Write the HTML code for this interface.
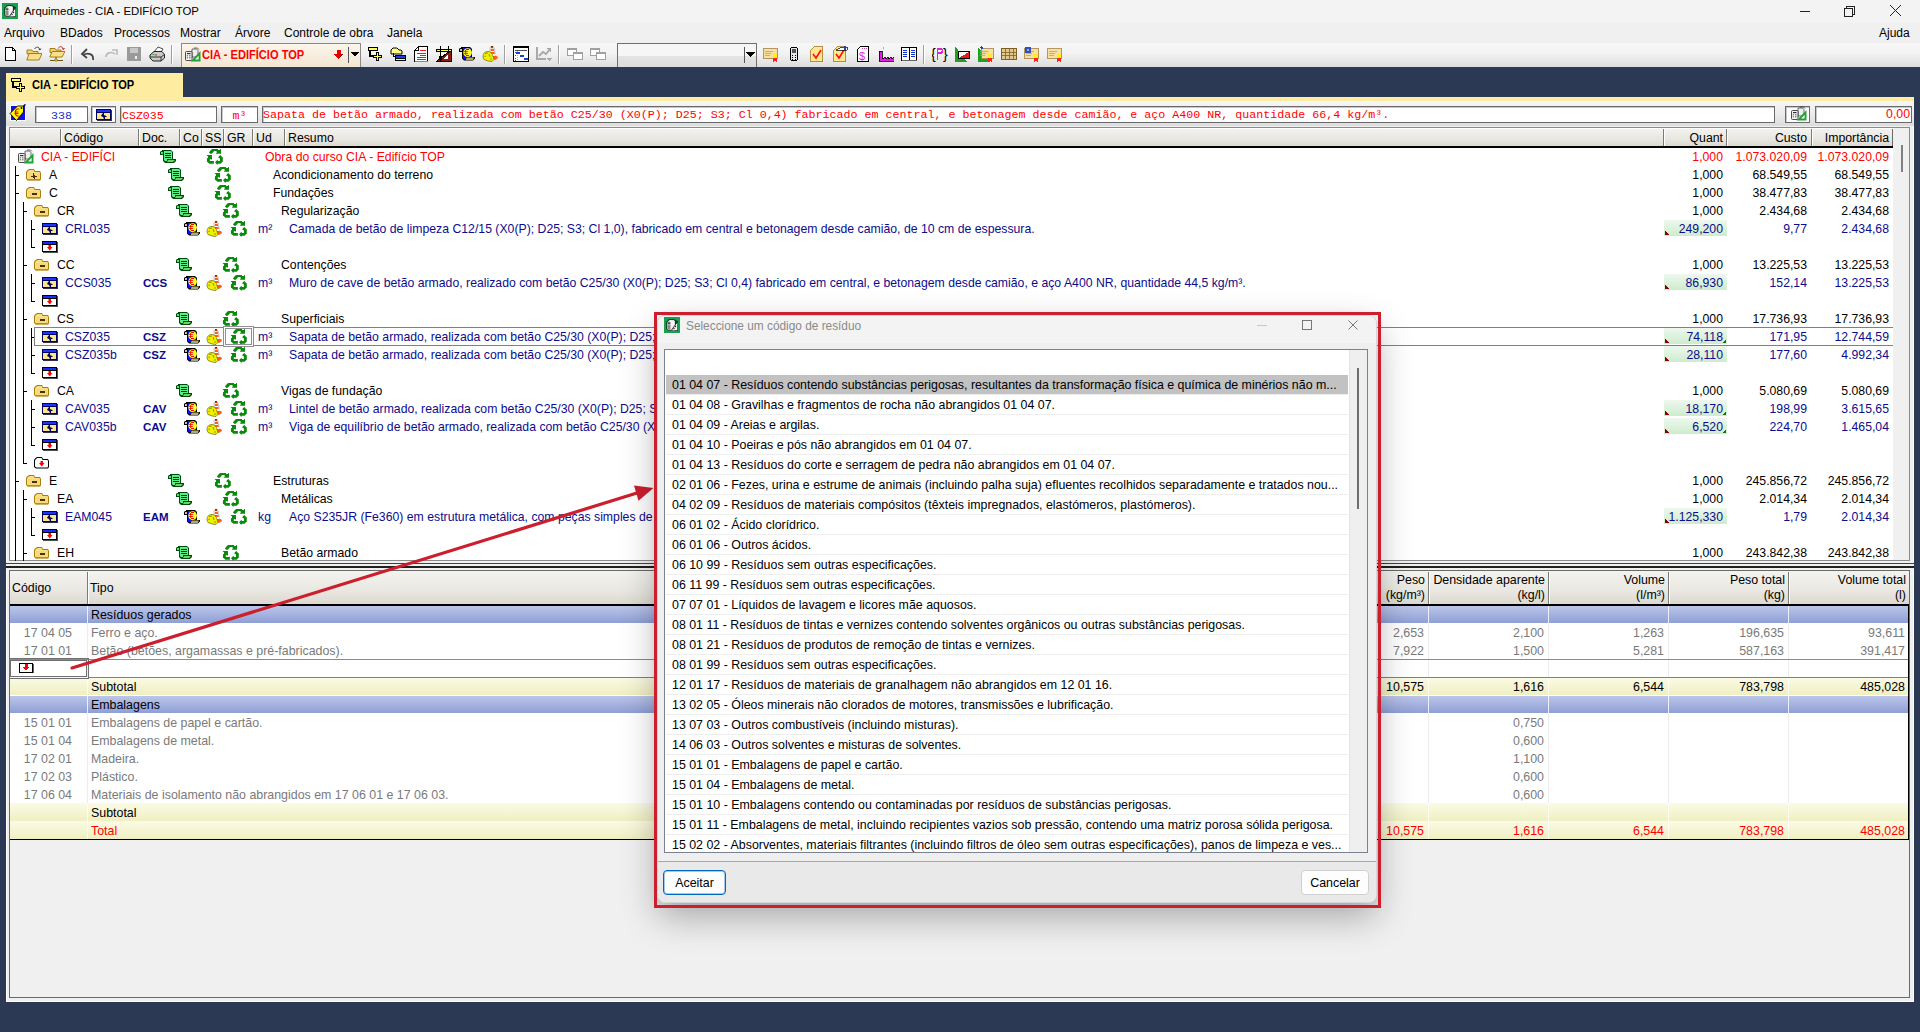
<!DOCTYPE html><html><head><meta charset="utf-8"><style>
*{margin:0;padding:0;box-sizing:border-box}
html,body{width:1920px;height:1032px;overflow:hidden;background:#2b3955;font-family:"Liberation Sans",sans-serif;font-size:12px;color:#000}
div{position:absolute}
.t{white-space:pre;overflow:visible}
</style></head><body><div style="left:0px;top:0px;width:1920px;height:23px;background:#f3f3f3"></div><div style="left:0px;top:23px;width:1920px;height:20px;background:#f0f0f0"></div><div style="left:0px;top:43px;width:1920px;height:24px;background:linear-gradient(#f7f7f7,#f2f2f2 45%,#dddddd)"></div><svg style="position:absolute;left:2px;top:3px" width="16" height="16" viewBox="0 0 16 16" shape-rendering="crispEdges"><rect x="0" y="0" width="16" height="16" fill="#17a050"/><g shape-rendering="auto"><path d="M2.2,5 L5,2 H9.5 L11.5,3 L14,4.3 V13.5 L13,14 H4.5 L2.2,12 Z" fill="#0a3a18"/><path d="M3,5.5 L5.3,3 H9.3 L11,4 V13.2 H4.5 L3,11.7 Z" fill="#c8c8c8"/><path d="M6,3.2 H9.2 L10.5,4 V9 L8,12.5 H6 Z" fill="#f4f4f4"/><rect x="3.5" y="5.5" width="3" height="1.2" fill="#222"/><rect x="3.5" y="7.5" width="3" height="5" fill="#8a8a8a"/><path d="M7.5,13.2 L13.3,5 V13.2 Z" fill="#f2f2f2"/><path d="M7.5,13.2 L13.3,5" stroke="#222" stroke-width="0.9"/><circle cx="11.5" cy="9.5" r="0.7" fill="#222"/><circle cx="10" cy="11.5" r="0.7" fill="#222"/></g></svg><div class="t" style="left:24px;top:2px;height:18px;line-height:18px;text-align:left;font-size:11.4px;color:#000">Arquimedes - CIA - EDIFÍCIO TOP</div><div style="left:1800px;top:11px;width:10px;height:1px;background:#222"></div><svg style="position:absolute;left:1843px;top:5px" width="13" height="13" viewBox="0 0 13 13" shape-rendering="crispEdges"><rect x="1.5" y="3.5" width="8" height="8" fill="none" stroke="#222"/><path d="M3.5 3.5V1.5h8v8h-2" fill="none" stroke="#222"/></svg><svg style="position:absolute;left:1889px;top:4px" width="13" height="13" viewBox="0 0 13 13" shape-rendering="crispEdges"><path d="M1 1L12 12M12 1L1 12" stroke="#222" stroke-width="1.1" fill="none"/></svg><div class="t" style="left:4px;top:24px;height:18px;line-height:18px;text-align:left;font-size:12px">Arquivo</div><div class="t" style="left:60px;top:24px;height:18px;line-height:18px;text-align:left;font-size:12px">BDados</div><div class="t" style="left:114px;top:24px;height:18px;line-height:18px;text-align:left;font-size:12px">Processos</div><div class="t" style="left:180px;top:24px;height:18px;line-height:18px;text-align:left;font-size:12px">Mostrar</div><div class="t" style="left:235px;top:24px;height:18px;line-height:18px;text-align:left;font-size:12px">Árvore</div><div class="t" style="left:284px;top:24px;height:18px;line-height:18px;text-align:left;font-size:12px">Controle de obra</div><div class="t" style="left:387px;top:24px;height:18px;line-height:18px;text-align:left;font-size:12px">Janela</div><div class="t" style="left:1879px;top:24px;height:18px;line-height:18px;text-align:left;font-size:12px">Ajuda</div><svg style="position:absolute;left:3px;top:46px" width="16" height="16" viewBox="0 0 16 16" shape-rendering="crispEdges"><path d="M2.5 1.5h7l3 3v10h-10z" fill="#fff" stroke="#000"/><path d="M9.5 1.5v3h3" fill="none" stroke="#000"/></svg><svg style="position:absolute;left:26px;top:46px" width="16" height="16" viewBox="0 0 16 16" shape-rendering="crispEdges"><g shape-rendering="auto"><path d="M1,4 H6 L7,5.5 H12 V8 H1 Z" fill="#f3cf70" stroke="#9a7410" stroke-width="0.9"/><path d="M0.8,14 L3.2,7.5 H16 L13,14 Z" fill="#fbe08c" stroke="#9a7410" stroke-width="0.9"/><path d="M8.5,3 C10,0.5 13,0.5 14,3.5 M12.5,3 L14,4 L15,2.5" stroke="#333" stroke-width="0.9" fill="none"/></g></svg><svg style="position:absolute;left:49px;top:46px" width="16" height="16" viewBox="0 0 16 16" shape-rendering="crispEdges"><g shape-rendering="auto"><path d="M1,2.5 H6 L7,4 H12 V6.5 H1 Z" fill="#f3cf70" stroke="#9a7410" stroke-width="0.9"/><path d="M0.8,11 L3.2,5.5 H16 L13,11 Z" fill="#fbe08c" stroke="#9a7410" stroke-width="0.9"/><path d="M7,11 V13.5 M1,14.5 H14" stroke="#6a5a10" stroke-width="1.2"/><circle cx="7" cy="14" r="1.4" fill="#d8c840" stroke="#6a5a10" stroke-width="0.5"/><path d="M9,2.5 C10.5,0 13.5,0 14.5,3 M13,2.5 L14.5,3.5 L15.5,2" stroke="#e02020" stroke-width="1" fill="none"/></g></svg><div style="left:71px;top:45px;width:1px;height:19px;background:#a0a0a0;border-right:1px solid #fff;width:2px"></div><svg style="position:absolute;left:80px;top:46px" width="16" height="16" viewBox="0 0 16 16" shape-rendering="crispEdges"><path d="M13 14c1-6-5-8-10-5" stroke="#444" stroke-width="1.8" fill="none" shape-rendering="auto"/><path d="M7 3L2 8l5 4" stroke="#444" stroke-width="1.8" fill="none" shape-rendering="auto"/></svg><svg style="position:absolute;left:103px;top:46px" width="16" height="16" viewBox="0 0 16 16" shape-rendering="crispEdges"><path d="M3 11c0-4 5-6 9-3" stroke="#bbb" stroke-width="1.6" fill="none" shape-rendering="auto"/><path d="M9 4h5v5" stroke="#bbb" stroke-width="1.6" fill="none" shape-rendering="auto"/></svg><svg style="position:absolute;left:126px;top:46px" width="16" height="16" viewBox="0 0 16 16" shape-rendering="crispEdges"><rect x="1" y="1" width="14" height="14" fill="#9a9a9a"/><rect x="4" y="2" width="8" height="5" fill="#c8c8c8"/><rect x="9" y="10" width="2" height="3" fill="#eee"/></svg><svg style="position:absolute;left:149px;top:46px" width="16" height="16" viewBox="0 0 16 16" shape-rendering="crispEdges"><g shape-rendering="auto"><path d="M5,6 L9,1 L14,3 L11,8 Z" fill="#fff" stroke="#222" stroke-width="0.8"/><path d="M1,9 L5,5.5 H13 L15.5,8.5 V12 L12,15 H4 L1,12 Z" fill="#c8c8c8" stroke="#111" stroke-width="0.9"/><path d="M1,11 H12 L15.5,8.5 M12,11 V15" stroke="#111" stroke-width="0.8" fill="none"/><path d="M3.5,8.5 H5.5" stroke="#20c020" stroke-width="1.2"/><path d="M6,9 H8" stroke="#e02020" stroke-width="1.2"/></g></svg><div style="left:171px;top:45px;width:1px;height:19px;background:#a0a0a0;border-right:1px solid #fff;width:2px"></div><div style="left:181px;top:43px;width:180px;height:24px;background:linear-gradient(#fbf5ea,#f2e6d2);border:1px solid #8a8a8a;border-bottom:none"></div><svg style="position:absolute;left:183px;top:45px" width="20" height="20" viewBox="0 0 20 20" shape-rendering="crispEdges"><g shape-rendering="auto"><path d="M9,4 H13.5 L15,5.5 V12 H9 Z" fill="#eee" stroke="#333" stroke-width="0.7"/><path d="M11,3 H14.5 L16,4.5" fill="none" stroke="#333" stroke-width="0.7"/><rect x="2.5" y="6.5" width="6.5" height="9" rx="1" fill="#f2f2f2" stroke="#222" stroke-width="0.8"/><path d="M4,8.6 H7.5" stroke="#222" stroke-width="1.1"/><path d="M3.8,10.8 H5 M6,10.8 H7.5 M3.8,12.8 H5 M6,12.8 H7.5" stroke="#333" stroke-width="0.8"/><path d="M7.5,16.5 L17.5,6 V16.5 Z" fill="#22a03a"/><path d="M12,14.5 L15.6,10.8 V14.5 Z" fill="#e8f8e8"/></g></svg><div class="t" style="left:202px;top:46px;height:18px;line-height:18px;text-align:left;font-size:12.6px;font-weight:bold;color:#ff0000;transform:scaleX(0.88);transform-origin:0 0">CIA - EDIFÍCIO TOP</div><svg style="position:absolute;left:334px;top:50px" width="9" height="9" viewBox="0 0 9 9" shape-rendering="crispEdges"><path d="M2.5 0h4v4h2.5L4.5 9L0 4h2.5z" fill="#e80000"/><path d="M4.5 9L9 4h-1L4.5 8z" fill="#700000"/></svg><div style="left:348px;top:47px;width:1px;height:16px;background:#555"></div><svg style="position:absolute;left:351px;top:52px" width="8" height="5" viewBox="0 0 8 5" shape-rendering="crispEdges"><path d="M0 0h8L4 5z" fill="#000"/></svg><svg style="position:absolute;left:367px;top:46px" width="16" height="16" viewBox="0 0 16 16" shape-rendering="crispEdges"><rect x="1" y="1" width="10" height="4" fill="#000"/><rect x="2" y="2" width="8" height="2" fill="#ffff60"/><path d="M3 5v5h4" stroke="#000" stroke-width="1.2" fill="none"/><path d="M9 6h3v3h3v3h-3v3H9v-3H6V9h3z" fill="#000"/><path d="M10 7h1v3h3v1h-3v3h-1v-3H7v-1h3z" fill="#ffff60"/></svg><svg style="position:absolute;left:390px;top:46px" width="16" height="16" viewBox="0 0 16 16" shape-rendering="crispEdges"><g shape-rendering="auto"><path d="M1,7 V4 L3,2 H7 L9,4 H11 L12,5 V8 H1 Z" fill="#ffff80" stroke="#000" stroke-width="1"/></g><rect x="5" y="9" width="11" height="6" fill="#000"/><rect x="6" y="10" width="9" height="2" fill="#1040f0"/><rect x="6" y="12.5" width="9" height="1.5" fill="#ffff60"/><rect x="3" y="7" width="1" height="4" fill="#000"/><rect x="3" y="10" width="3" height="1" fill="#000"/></svg><svg style="position:absolute;left:413px;top:46px" width="16" height="16" viewBox="0 0 16 16" shape-rendering="crispEdges"><path d="M1.5 4.5l4-4h9v15h-13z" fill="#fff" stroke="#000"/><path d="M1.5 4.5h4v-4" fill="none" stroke="#000"/><path d="M7 4h6M4 7h9M7 9h6M4 11h9M4 13h9" stroke="#ff1010"/><rect x="2" y="15" width="13" height="1" fill="#888"/></svg><svg style="position:absolute;left:436px;top:46px" width="16" height="16" viewBox="0 0 16 16" shape-rendering="crispEdges"><path d="M1 15L15 4v11z" fill="#8a1a10" stroke="#000"/><path d="M7 13l5-4v4z" fill="#fff"/><rect x="0" y="3" width="16" height="3" fill="#000"/><rect x="1" y="4" width="14" height="1" fill="#ffff40"/><rect x="4" y="0" width="1" height="15" fill="#000"/><rect x="12" y="0" width="1" height="5" fill="#000"/><circle cx="4.5" cy="12" r="1.5" fill="none" stroke="#000"/></svg><svg style="position:absolute;left:457px;top:44px" width="20" height="20" viewBox="0 0 20 20" shape-rendering="crispEdges"><g shape-rendering="auto"><path d="M4,3 H13 L14,4 L15,5 V13 H18 V14.5 L17,15.5 L16,16.5 H7 L6,15.5 L5,14.5 V8 H2 V5 L3,4 H4 Z" fill="#000"/><path d="M5,4 H13 L14,5 V13 H9 V15 H7 L6,14 V4 Z" fill="#1010ff"/><circle cx="10.6" cy="8.6" r="4.3" fill="#ffff20"/><path d="M8.2,6 H9.2 V11 H8.2 Z M9,5 H12 V6 H9 Z M7,7.2 H11 V8 H7 Z M7,9.2 H11 V10 H7 Z M9,11 H12 V12 H9 Z" fill="#ff0000"/><path d="M3,5 H5 V7 H3 Z" fill="#c0c0c0"/><path d="M9.5,13.5 H17 L16,15.5 H9 Z" fill="#b8b040"/><path d="M9,15 H16 V15.6 H9 Z" fill="#d8d8d8"/></g></svg><svg style="position:absolute;left:480px;top:44px" width="20" height="20" viewBox="0 0 20 20" shape-rendering="crispEdges"><g shape-rendering="auto"><path d="M11,2 H13 L14.5,8 L15,11.5 L17.5,12.5 L18,14 L15,16 L12.5,15 L10.5,8 Z" fill="#ff6010"/><path d="M11,2 H13 L13.3,3.5 H10.8 Z" fill="#902000"/><path d="M10.6,4.2 H13.5 L13.7,5 H10.5 Z M10.3,7 H14 L14.3,8 H10.2 Z M11.5,10 H14.8 L15,12 H12 Z" fill="#fff"/><path d="M10.2,3 L9.8,8 M14.5,4 L15.2,10" stroke="#9aa8b8" stroke-width="0.6" fill="none"/><path d="M3,13 C3,9 5,7.5 8,7.5 C10.5,7.5 12.5,9.5 13,12.5 L14,15.5 L12,17.5 L8,17 L4,15.5 Z" fill="#f0f000" stroke="#6a6a00" stroke-width="0.7"/><path d="M5,9.5 L8,9 M9,10 L10,13 M11,14 L11,16 M4.5,12.5 L6,12" stroke="#8a8a00" stroke-width="0.9"/></g></svg><div style="left:504px;top:45px;width:1px;height:19px;background:#a0a0a0;border-right:1px solid #fff;width:2px"></div><svg style="position:absolute;left:513px;top:46px" width="16" height="16" viewBox="0 0 16 16" shape-rendering="crispEdges"><rect x="0.5" y="0.5" width="15" height="15" fill="#fff" stroke="#000"/><rect x="0" y="0" width="16" height="2" fill="#000"/><path d="M2 4h12" stroke="#000" stroke-width="0.7"/><path d="M2 6h1M2 9h1M2 12h1M2 14h1" stroke="#555"/><path d="M4 5v10" stroke="#aaa" stroke-dasharray="1 1"/><rect x="3" y="6" width="4" height="2" fill="#1040e0"/><rect x="7" y="9" width="4" height="2" fill="#1040e0"/><rect x="11" y="12" width="4" height="2" fill="#1040e0"/></svg><svg style="position:absolute;left:536px;top:46px" width="16" height="16" viewBox="0 0 16 16" shape-rendering="crispEdges"><path d="M1 1v12h9" stroke="#a8a8a8" fill="none" stroke-width="1.2"/><path d="M3 10l4-4 3 2 4-5" stroke="#a8a8a8" fill="none" stroke-width="1.8" shape-rendering="auto"/><path d="M10 2h5v5z" fill="#a8a8a8"/><path d="M10 12h6l-3 3z" fill="#a8a8a8"/></svg><div style="left:558px;top:45px;width:1px;height:19px;background:#a0a0a0;border-right:1px solid #fff;width:2px"></div><svg style="position:absolute;left:567px;top:46px" width="16" height="16" viewBox="0 0 16 16" shape-rendering="crispEdges"><rect x="0.5" y="2.5" width="9" height="7" fill="#fff" stroke="#a0a0a0" stroke-width="1.2"/><rect x="1" y="2" width="8" height="2" fill="#a0a0a0"/><rect x="6.5" y="6.5" width="9" height="7" fill="#fff" stroke="#a0a0a0" stroke-width="1.2"/><rect x="7" y="6" width="8" height="2" fill="#a0a0a0"/><rect x="2" y="9" width="4" height="1" fill="#a0a0a0"/></svg><svg style="position:absolute;left:590px;top:46px" width="16" height="16" viewBox="0 0 16 16" shape-rendering="crispEdges"><rect x="0.5" y="2.5" width="9" height="7" fill="#fff" stroke="#a0a0a0" stroke-width="1.2"/><rect x="1" y="2" width="8" height="2" fill="#a0a0a0"/><rect x="6.5" y="6.5" width="9" height="7" fill="#fff" stroke="#a0a0a0" stroke-width="1.2"/><rect x="7" y="6" width="8" height="2" fill="#a0a0a0"/><rect x="2" y="9" width="4" height="1" fill="#a0a0a0"/></svg><div style="left:617px;top:43px;width:140px;height:24px;background:linear-gradient(#f6f6f6 0,#f6f6f6 50%,#e4e4e4 51%,#dcdcdc);border:1px solid #6e6e6e;border-bottom:none"></div><div style="left:744px;top:47px;width:1px;height:16px;background:#555"></div><svg style="position:absolute;left:746px;top:52px" width="9" height="5" viewBox="0 0 9 5" shape-rendering="crispEdges"><path d="M0 0h9L4.5 5z" fill="#000"/></svg><svg style="position:absolute;left:763px;top:46px" width="16" height="16" viewBox="0 0 16 16" shape-rendering="crispEdges"><rect x="0.5" y="2.5" width="14" height="10" fill="#f8e0a0" stroke="#a08040" stroke-width="0.8"/><path d="M2 5h8M2 7h6M2 9h5" stroke="#c0a060" stroke-width="0.8"/><circle cx="12" cy="10" r="2.5" fill="#ffee20"/><path d="M10 12v4l2-1 2 1v-4" fill="#ff2020"/></svg><svg style="position:absolute;left:786px;top:46px" width="16" height="16" viewBox="0 0 16 16" shape-rendering="crispEdges"><rect x="4.5" y="1.5" width="7" height="13" rx="2" fill="#e8e8e8" stroke="#000"/><rect x="6" y="3" width="4" height="4" fill="#555"/><path d="M6 9h1M9 9h1M6 11h1M9 11h1M6 13h1M9 13h1" stroke="#000"/></svg><svg style="position:absolute;left:809px;top:46px" width="16" height="16" viewBox="0 0 16 16" shape-rendering="crispEdges"><path d="M1.5 3.5l3-3h9v15h-12z" fill="#ffe890" stroke="#a07820" stroke-width="0.8"/><path d="M4 8l3 4 5-8" stroke="#ff1010" stroke-width="1.6" fill="none" shape-rendering="auto"/></svg><svg style="position:absolute;left:832px;top:46px" width="16" height="16" viewBox="0 0 16 16" shape-rendering="crispEdges"><path d="M1.5 3.5l3-3h9v15h-12z" fill="#ffe890" stroke="#a07820" stroke-width="0.8"/><path d="M4 8l3 4 5-8" stroke="#ff1010" stroke-width="1.6" fill="none" shape-rendering="auto"/><path d="M4 4l6-3 5 0v3h-5z" fill="#fff" stroke="#000" stroke-width="0.7"/><path d="M13 0v4" stroke="#2040d0" stroke-width="1.5"/></svg><svg style="position:absolute;left:855px;top:46px" width="16" height="16" viewBox="0 0 16 16" shape-rendering="crispEdges"><path d="M2.5 3.5l3-3h8v15h-11z" fill="#fff" stroke="#000"/><path d="M7 2h1M9 2h1M11 2h1" stroke="#c040c0"/><text x="4" y="14" font-size="11" font-family="Liberation Sans" fill="#e020e0">$</text></svg><svg style="position:absolute;left:878px;top:46px" width="16" height="16" viewBox="0 0 16 16" shape-rendering="crispEdges"><path d="M1 5v10h15v-4l-3 2v-2l-3 2v-2l-3 2v-2l-3 2V5z" fill="#e020e0" stroke="#000" stroke-width="0.8"/><path d="M5 1l1 2" stroke="#aaa"/></svg><svg style="position:absolute;left:901px;top:46px" width="16" height="16" viewBox="0 0 16 16" shape-rendering="crispEdges"><rect x="0.5" y="1.5" width="15" height="13" fill="#fff" stroke="#000"/><path d="M8 2v12" stroke="#000"/><rect x="2" y="4" width="4" height="1" fill="#1030d0"/><rect x="2" y="6" width="4" height="1" fill="#1030d0"/><rect x="2" y="8" width="4" height="1" fill="#1030d0"/><rect x="2" y="10" width="4" height="1" fill="#1030d0"/><rect x="10" y="4" width="4" height="1" fill="#1030d0"/><rect x="10" y="6" width="4" height="1" fill="#1030d0"/><rect x="10" y="8" width="4" height="1" fill="#1030d0"/><rect x="10" y="10" width="4" height="1" fill="#1030d0"/><rect x="1" y="14" width="15" height="1" fill="#666"/></svg><div style="left:923px;top:45px;width:1px;height:19px;background:#a0a0a0;border-right:1px solid #fff;width:2px"></div><svg style="position:absolute;left:932px;top:46px" width="16" height="16" viewBox="0 0 16 16" shape-rendering="crispEdges"><text x="-1" y="13" font-size="14" font-family="Liberation Sans" fill="#000">{</text><text x="11" y="13" font-size="14" font-family="Liberation Sans" fill="#000">}</text><path d="M5 3h4c2 0 2 4 0 4H6M5.5 3v11" stroke="#e020e0" stroke-width="1.8" fill="none"/></svg><svg style="position:absolute;left:955px;top:46px" width="16" height="16" viewBox="0 0 16 16" shape-rendering="crispEdges"><path d="M0 0v16h12z" fill="#20a020"/><rect x="3.5" y="5.5" width="11" height="7" fill="#fff" stroke="#000"/><path d="M4 12L14 6v6z" fill="#e02020"/></svg><svg style="position:absolute;left:978px;top:46px" width="16" height="16" viewBox="0 0 16 16" shape-rendering="crispEdges"><path d="M0 1v15h12z" fill="#20a020"/><rect x="3.5" y="2.5" width="12" height="10" fill="#f8e0a0" stroke="#a08040" stroke-width="0.8"/><path d="M2 5h8M2 7h6M2 9h5" stroke="#c0a060" stroke-width="0.8"/><circle cx="12" cy="10" r="2.5" fill="#ffee20"/><path d="M10 12v4l2-1 2 1v-4" fill="#ff2020"/><path d="M3 1l2 2" stroke="#2040d0" stroke-width="2"/></svg><svg style="position:absolute;left:1001px;top:46px" width="16" height="16" viewBox="0 0 16 16" shape-rendering="crispEdges"><rect x="0.5" y="2.5" width="15" height="11" fill="#e0c890" stroke="#806020"/><path d="M4 3v10M8 3v10M12 3v10M1 6h14M1 9h14" stroke="#806020" stroke-width="0.8"/></svg><svg style="position:absolute;left:1024px;top:46px" width="16" height="16" viewBox="0 0 16 16" shape-rendering="crispEdges"><rect x="0.5" y="2.5" width="14" height="10" fill="#f8e0a0" stroke="#a08040" stroke-width="0.8"/><path d="M2 5h8M2 7h6M2 9h5" stroke="#c0a060" stroke-width="0.8"/><circle cx="12" cy="10" r="2.5" fill="#ffee20"/><path d="M10 12v4l2-1 2 1v-4" fill="#ff2020"/><circle cx="4" cy="4" r="3.5" fill="#3050c0"/><circle cx="4" cy="4" r="1.3" fill="#aac"/></svg><svg style="position:absolute;left:1047px;top:46px" width="16" height="16" viewBox="0 0 16 16" shape-rendering="crispEdges"><rect x="0.5" y="2.5" width="14" height="10" fill="#f8e0a0" stroke="#a08040" stroke-width="0.8"/><path d="M2 5h8M2 7h6M2 9h5" stroke="#c0a060" stroke-width="0.8"/><circle cx="12" cy="10" r="2.5" fill="#ffee20"/><path d="M10 12v4l2-1 2 1v-4" fill="#ff2020"/></svg><div style="left:6px;top:73px;width:177px;height:24px;background:#feeca0"></div><svg style="position:absolute;left:10px;top:77px" width="16" height="16" viewBox="0 0 16 16" shape-rendering="crispEdges"><rect x="1" y="1" width="10" height="4" fill="#000"/><rect x="2" y="2" width="8" height="2" fill="#ffff60"/><path d="M3 5v5h4" stroke="#000" stroke-width="1.2" fill="none"/><path d="M9 6h3v3h3v3h-3v3H9v-3H6V9h3z" fill="#000"/><path d="M10 7h1v3h3v1h-3v3h-1v-3H7v-1h3z" fill="#ffff60"/></svg><div class="t" style="left:32px;top:76px;height:18px;line-height:18px;text-align:left;font-size:12.6px;font-weight:bold;transform:scaleX(0.88);transform-origin:0 0">CIA - EDIFÍCIO TOP</div><div style="left:6px;top:97px;width:1908px;height:4px;background:#feeca0"></div><div style="left:6px;top:101px;width:1908px;height:901px;background:#f0f0f0;border-left:1px solid #fff;border-right:1px solid #fff;border-bottom:1px solid #fff"></div><div style="left:6px;top:101px;width:1908px;height:25px;background:linear-gradient(#f6f6f8,#ececec 50%,#dcdcdc)"></div><svg style="position:absolute;left:9px;top:104px" width="18" height="18" viewBox="0 0 18 18" shape-rendering="crispEdges"><rect x="1" y="1" width="16" height="16" fill="#fff"/><rect x="2" y="2" width="14" height="14" fill="#1010e8"/><g shape-rendering="auto"><path d="M1,9.5 L8.5,2 H14.5 V8 L7.5,16.5 Z" fill="#ffff00" stroke="#000" stroke-width="0.9"/><path d="M14.5,2 L16.5,0.5" stroke="#000" stroke-width="1.4"/><circle cx="12.5" cy="4" r="0.9" fill="#000"/><path d="M10.5,5 H8 L6.5,6.5 V10.5 L8,12 H10.5 M5.5,8 H9.5 M5.5,9.5 H9.5" stroke="#ff0000" stroke-width="1.1" fill="none"/></g></svg><div style="left:35px;top:106px;width:53px;height:17px;background:#fff;border:1px solid #6a6a6a;box-shadow:inset 1px 1px 0 #c8c8c8"></div><div class="t" style="left:35px;top:107px;height:17px;line-height:17px;width:53px;text-align:center;font-family:'Liberation Mono';font-size:11.6px;color:#2030c0">338</div><div style="left:91px;top:106px;width:25px;height:17px;background:#fff;border:1px solid #6a6a6a;box-shadow:inset 1px 1px 0 #c8c8c8"></div><svg style="position:absolute;left:94px;top:105px" width="20" height="20" viewBox="0 0 20 20" shape-rendering="crispEdges"><rect x="3" y="5" width="15" height="11" fill="#303050"/><rect x="2" y="4" width="15" height="11" fill="#000060"/><rect x="3" y="5" width="13" height="2" fill="#1838ff"/><rect x="3" y="8" width="13" height="6" fill="#fbe68a"/><path d="M9,8 H10 V10 L12,11 L13,12 L11,12 V14 H10 L9,12 L7,11 L7.5,10 Z" fill="#000060" shape-rendering="auto"/></svg><div style="left:120px;top:106px;width:97px;height:17px;background:#fff;border:1px solid #6a6a6a;box-shadow:inset 1px 1px 0 #c8c8c8"></div><div class="t" style="left:122px;top:107px;height:17px;line-height:17px;text-align:left;font-family:'Liberation Mono';font-size:11.6px;color:#ff0000">CSZ035</div><div style="left:221px;top:106px;width:37px;height:17px;background:#fff;border:1px solid #6a6a6a;box-shadow:inset 1px 1px 0 #c8c8c8"></div><div class="t" style="left:221px;top:107px;height:17px;line-height:17px;width:37px;text-align:center;font-family:'Liberation Mono';font-size:11.6px;color:#ff0000">m³</div><div style="left:262px;top:106px;width:1513px;height:17px;background:#fff;border:1px solid #6a6a6a;box-shadow:inset 1px 1px 0 #c8c8c8"></div><div class="t" style="left:263px;top:107px;height:17px;line-height:17px;text-align:left;font-family:'Liberation Mono';font-size:11.67px;color:#ff0000">Sapata de betão armado, realizada com betão C25/30 (X0(P); D25; S3; Cl 0,4) fabricado em central, e betonagem desde camião, e aço A400 NR, quantidade 66,4 kg/m³.</div><div style="left:1785px;top:106px;width:25px;height:17px;background:#fff;border:1px solid #6a6a6a;box-shadow:inset 1px 1px 0 #c8c8c8"></div><svg style="position:absolute;left:1789px;top:104px" width="20" height="20" viewBox="0 0 20 20" shape-rendering="crispEdges"><g shape-rendering="auto"><path d="M9,4 H13.5 L15,5.5 V12 H9 Z" fill="#eee" stroke="#333" stroke-width="0.7"/><path d="M11,3 H14.5 L16,4.5" fill="none" stroke="#333" stroke-width="0.7"/><rect x="2.5" y="6.5" width="6.5" height="9" rx="1" fill="#f2f2f2" stroke="#222" stroke-width="0.8"/><path d="M4,8.6 H7.5" stroke="#222" stroke-width="1.1"/><path d="M3.8,10.8 H5 M6,10.8 H7.5 M3.8,12.8 H5 M6,12.8 H7.5" stroke="#333" stroke-width="0.8"/><path d="M7.5,16.5 L17.5,6 V16.5 Z" fill="#22a03a"/><path d="M12,14.5 L15.6,10.8 V14.5 Z" fill="#e8f8e8"/></g></svg><div style="left:1815px;top:106px;width:97px;height:17px;background:#fff;border:1px solid #6a6a6a;box-shadow:inset 1px 1px 0 #c8c8c8"></div><div class="t" style="left:1815px;top:106px;height:17px;line-height:17px;width:95px;text-align:right;font-size:12.3px;color:#ff0000">0,00</div><div style="left:9px;top:127px;width:1901px;height:434px;background:#fff;border:1px solid #8a8a8a"></div><div style="left:10px;top:128px;width:1883px;height:18px;background:linear-gradient(#f4f3ef,#e9e7e1 60%,#dcd9d0);border-right:1px solid #6a6a6a"></div><div style="left:10px;top:146px;width:1883px;height:2px;background:#000"></div><div style="left:10px;top:128px;width:1883px;height:1px;background:#fff"></div><div style="left:60px;top:129px;width:1px;height:17px;background:#7a7a78"></div><div style="left:61px;top:129px;width:1px;height:17px;background:#fff"></div><div style="left:138px;top:129px;width:1px;height:17px;background:#7a7a78"></div><div style="left:139px;top:129px;width:1px;height:17px;background:#fff"></div><div style="left:179px;top:129px;width:1px;height:17px;background:#7a7a78"></div><div style="left:180px;top:129px;width:1px;height:17px;background:#fff"></div><div style="left:201px;top:129px;width:1px;height:17px;background:#7a7a78"></div><div style="left:202px;top:129px;width:1px;height:17px;background:#fff"></div><div style="left:223px;top:129px;width:1px;height:17px;background:#7a7a78"></div><div style="left:224px;top:129px;width:1px;height:17px;background:#fff"></div><div style="left:252px;top:129px;width:1px;height:17px;background:#7a7a78"></div><div style="left:253px;top:129px;width:1px;height:17px;background:#fff"></div><div style="left:284px;top:129px;width:1px;height:17px;background:#7a7a78"></div><div style="left:285px;top:129px;width:1px;height:17px;background:#fff"></div><div style="left:1663px;top:129px;width:1px;height:17px;background:#7a7a78"></div><div style="left:1664px;top:129px;width:1px;height:17px;background:#fff"></div><div style="left:1726px;top:129px;width:1px;height:17px;background:#7a7a78"></div><div style="left:1727px;top:129px;width:1px;height:17px;background:#fff"></div><div style="left:1811px;top:129px;width:1px;height:17px;background:#7a7a78"></div><div style="left:1812px;top:129px;width:1px;height:17px;background:#fff"></div><div class="t" style="left:64px;top:129px;height:19px;line-height:19px;text-align:left;font-size:12.3px">Código</div><div class="t" style="left:142px;top:129px;height:19px;line-height:19px;text-align:left;font-size:12.3px">Doc.</div><div class="t" style="left:183px;top:129px;height:19px;line-height:19px;text-align:left;font-size:12.3px">Co</div><div class="t" style="left:205px;top:129px;height:19px;line-height:19px;text-align:left;font-size:12.3px">SS</div><div class="t" style="left:227px;top:129px;height:19px;line-height:19px;text-align:left;font-size:12.3px">GR</div><div class="t" style="left:256px;top:129px;height:19px;line-height:19px;text-align:left;font-size:12.3px">Ud</div><div class="t" style="left:288px;top:129px;height:19px;line-height:19px;text-align:left;font-size:12.3px">Resumo</div><div class="t" style="left:1663px;top:129px;height:19px;line-height:19px;width:60px;text-align:right;font-size:12.3px">Quant</div><div class="t" style="left:1726px;top:129px;height:19px;line-height:19px;width:81px;text-align:right;font-size:12.3px">Custo</div><div class="t" style="left:1811px;top:129px;height:19px;line-height:19px;width:78px;text-align:right;font-size:12.3px">Importância</div><div style="left:1893px;top:128px;width:16px;height:432px;background:#f0f0f0"></div><div style="left:1901px;top:145px;width:2px;height:27px;background:#808080"></div><svg style="position:absolute;left:16px;top:147px" width="20" height="20" viewBox="0 0 20 20" shape-rendering="crispEdges"><g shape-rendering="auto"><path d="M9,4 H13.5 L15,5.5 V12 H9 Z" fill="#eee" stroke="#333" stroke-width="0.7"/><path d="M11,3 H14.5 L16,4.5" fill="none" stroke="#333" stroke-width="0.7"/><rect x="2.5" y="6.5" width="6.5" height="9" rx="1" fill="#f2f2f2" stroke="#222" stroke-width="0.8"/><path d="M4,8.6 H7.5" stroke="#222" stroke-width="1.1"/><path d="M3.8,10.8 H5 M6,10.8 H7.5 M3.8,12.8 H5 M6,12.8 H7.5" stroke="#333" stroke-width="0.8"/><path d="M7.5,16.5 L17.5,6 V16.5 Z" fill="#22a03a"/><path d="M12,14.5 L15.6,10.8 V14.5 Z" fill="#e8f8e8"/></g></svg><div class="t" style="left:41px;top:148px;height:19px;line-height:19px;text-align:left;font-size:12.25px;color:#ff0000">CIA - EDIFÍCI</div><svg style="position:absolute;left:158px;top:147px" width="20" height="20" viewBox="0 0 20 20" shape-rendering="crispEdges"><g shape-rendering="auto"><path d="M4,3 H13 L14,4 L15,5 V12 H18 V14 L17,15 L16,16 H7 L6,15 L5,14 V8 H2 V5 L3,4 H4 Z" fill="#004a10"/><path d="M5,4 H13 L14,5 V12 H9 V14 H7 L6,13 V4 Z" fill="#58f088"/><path d="M3,5 H5 V7 H3 Z" fill="#60e070"/><path d="M10,13 H17 L16,14 L15,15 H9 Z" fill="#70d060"/><path d="M7,6 H13 V7 H7 Z M7,8 H13 V9 H7 Z M7,10 H13 V11 H7 Z" fill="#003a00"/></g></svg><svg style="position:absolute;left:205px;top:147px" width="20" height="20" viewBox="0 0 20 20" shape-rendering="crispEdges"><g fill="#0a8a0a" shape-rendering="auto"><path d="M7.07,1.94 L12.8,1.94 L13.2,2.9 L14.9,2.9 L15.3,1.94 L16,1.94 L16,6.8 L11.05,6.8 L11.05,6.2 L11.8,5.6 L11.8,4.65 L11.05,3.88 L9.1,3.88 L8.5,4.65 L7.75,5.8 L6.8,6.8 L5.2,6.8 L3.9,5.4 L5.04,4.07 L6,3.1 Z"/><path d="M1.94,7.95 L6.98,7.95 L6.98,12.6 L5.8,12.6 L5.4,12 L4.85,12 L4.85,13.95 L8.9,13.95 L8.9,16.86 L4.26,16.86 L3.1,15.5 L1.94,14.7 L1.94,11.2 L2.9,11.05 L2.9,9.1 L1.94,8.7 Z"/><path d="M15.5,7.95 L16.86,9.7 L17.8,10.3 L17.8,14.7 L16.7,15.5 L15.7,16.86 L12.8,16.86 L12.4,18 L10.1,15.5 L10.85,14.34 L12.4,13 L13.2,13.95 L14.9,13.95 L14.9,11.6 L13.95,10.85 L13,10.5 L14.15,8.9 Z"/></g></svg><div class="t" style="left:265px;top:148px;height:19px;line-height:19px;text-align:left;font-size:12.25px;color:#ff0000">Obra do curso CIA - Edifício TOP</div><div class="t" style="left:1663px;top:148px;height:19px;line-height:19px;width:60px;text-align:right;font-size:12.25px;color:#ff0000">1,000</div><div class="t" style="left:1726px;top:148px;height:19px;line-height:19px;width:81px;text-align:right;font-size:12.25px;color:#ff0000">1.073.020,09</div><div class="t" style="left:1811px;top:148px;height:19px;line-height:19px;width:78px;text-align:right;font-size:12.25px;color:#ff0000">1.073.020,09</div><svg style="position:absolute;left:24px;top:165px" width="20" height="20" viewBox="0 0 20 20" shape-rendering="crispEdges"><g shape-rendering="auto"><path d="M5,4 H10 L11,6 H16 L17,8 V14 L16,15.5 H4 L2,14 V7 L3,5.5 Z" fill="#b07a08"/><path d="M5.5,5 H9.6 L10.5,7 H15.5 L16,8 V13.5 L15.5,14.5 H4.5 L3,13.5 V7.5 L4,6 Z" fill="#f8e08a"/><path d="M4,8 H15.5 V13.5 H4 Z" fill="#f5da78"/><path d="M3,14 H16.5 V15.3 H3 Z" fill="#c08a10"/></g><path d="M9.5,8 L11,11 L13,11.5 L11,12 L10.5,14 L9,12 L7,11.5 L9,10.5 Z" fill="#4a3000"/></svg><div class="t" style="left:49px;top:166px;height:19px;line-height:19px;text-align:left;font-size:12.25px;color:#000">A</div><svg style="position:absolute;left:166px;top:165px" width="20" height="20" viewBox="0 0 20 20" shape-rendering="crispEdges"><g shape-rendering="auto"><path d="M4,3 H13 L14,4 L15,5 V12 H18 V14 L17,15 L16,16 H7 L6,15 L5,14 V8 H2 V5 L3,4 H4 Z" fill="#004a10"/><path d="M5,4 H13 L14,5 V12 H9 V14 H7 L6,13 V4 Z" fill="#58f088"/><path d="M3,5 H5 V7 H3 Z" fill="#60e070"/><path d="M10,13 H17 L16,14 L15,15 H9 Z" fill="#70d060"/><path d="M7,6 H13 V7 H7 Z M7,8 H13 V9 H7 Z M7,10 H13 V11 H7 Z" fill="#003a00"/></g></svg><svg style="position:absolute;left:213px;top:165px" width="20" height="20" viewBox="0 0 20 20" shape-rendering="crispEdges"><g fill="#0a8a0a" shape-rendering="auto"><path d="M7.07,1.94 L12.8,1.94 L13.2,2.9 L14.9,2.9 L15.3,1.94 L16,1.94 L16,6.8 L11.05,6.8 L11.05,6.2 L11.8,5.6 L11.8,4.65 L11.05,3.88 L9.1,3.88 L8.5,4.65 L7.75,5.8 L6.8,6.8 L5.2,6.8 L3.9,5.4 L5.04,4.07 L6,3.1 Z"/><path d="M1.94,7.95 L6.98,7.95 L6.98,12.6 L5.8,12.6 L5.4,12 L4.85,12 L4.85,13.95 L8.9,13.95 L8.9,16.86 L4.26,16.86 L3.1,15.5 L1.94,14.7 L1.94,11.2 L2.9,11.05 L2.9,9.1 L1.94,8.7 Z"/><path d="M15.5,7.95 L16.86,9.7 L17.8,10.3 L17.8,14.7 L16.7,15.5 L15.7,16.86 L12.8,16.86 L12.4,18 L10.1,15.5 L10.85,14.34 L12.4,13 L13.2,13.95 L14.9,13.95 L14.9,11.6 L13.95,10.85 L13,10.5 L14.15,8.9 Z"/></g></svg><div class="t" style="left:273px;top:166px;height:19px;line-height:19px;text-align:left;font-size:12.25px;color:#000">Acondicionamento do terreno</div><div class="t" style="left:1663px;top:166px;height:19px;line-height:19px;width:60px;text-align:right;font-size:12.25px;color:#000">1,000</div><div class="t" style="left:1726px;top:166px;height:19px;line-height:19px;width:81px;text-align:right;font-size:12.25px;color:#000">68.549,55</div><div class="t" style="left:1811px;top:166px;height:19px;line-height:19px;width:78px;text-align:right;font-size:12.25px;color:#000">68.549,55</div><svg style="position:absolute;left:24px;top:183px" width="20" height="20" viewBox="0 0 20 20" shape-rendering="crispEdges"><g shape-rendering="auto"><path d="M5,4 H10 L11,6 H16 L17,8 V14 L16,15.5 H4 L2,14 V7 L3,5.5 Z" fill="#b07a08"/><path d="M5.5,5 H9.6 L10.5,7 H15.5 L16,8 V13.5 L15.5,14.5 H4.5 L3,13.5 V7.5 L4,6 Z" fill="#f8e08a"/><path d="M4,8 H15.5 V13.5 H4 Z" fill="#f5da78"/><path d="M3,14 H16.5 V15.3 H3 Z" fill="#c08a10"/></g><rect x="8" y="10" width="5" height="1.5" fill="#4a3000"/></svg><div class="t" style="left:49px;top:184px;height:19px;line-height:19px;text-align:left;font-size:12.25px;color:#000">C</div><svg style="position:absolute;left:166px;top:183px" width="20" height="20" viewBox="0 0 20 20" shape-rendering="crispEdges"><g shape-rendering="auto"><path d="M4,3 H13 L14,4 L15,5 V12 H18 V14 L17,15 L16,16 H7 L6,15 L5,14 V8 H2 V5 L3,4 H4 Z" fill="#004a10"/><path d="M5,4 H13 L14,5 V12 H9 V14 H7 L6,13 V4 Z" fill="#58f088"/><path d="M3,5 H5 V7 H3 Z" fill="#60e070"/><path d="M10,13 H17 L16,14 L15,15 H9 Z" fill="#70d060"/><path d="M7,6 H13 V7 H7 Z M7,8 H13 V9 H7 Z M7,10 H13 V11 H7 Z" fill="#003a00"/></g></svg><svg style="position:absolute;left:213px;top:183px" width="20" height="20" viewBox="0 0 20 20" shape-rendering="crispEdges"><g fill="#0a8a0a" shape-rendering="auto"><path d="M7.07,1.94 L12.8,1.94 L13.2,2.9 L14.9,2.9 L15.3,1.94 L16,1.94 L16,6.8 L11.05,6.8 L11.05,6.2 L11.8,5.6 L11.8,4.65 L11.05,3.88 L9.1,3.88 L8.5,4.65 L7.75,5.8 L6.8,6.8 L5.2,6.8 L3.9,5.4 L5.04,4.07 L6,3.1 Z"/><path d="M1.94,7.95 L6.98,7.95 L6.98,12.6 L5.8,12.6 L5.4,12 L4.85,12 L4.85,13.95 L8.9,13.95 L8.9,16.86 L4.26,16.86 L3.1,15.5 L1.94,14.7 L1.94,11.2 L2.9,11.05 L2.9,9.1 L1.94,8.7 Z"/><path d="M15.5,7.95 L16.86,9.7 L17.8,10.3 L17.8,14.7 L16.7,15.5 L15.7,16.86 L12.8,16.86 L12.4,18 L10.1,15.5 L10.85,14.34 L12.4,13 L13.2,13.95 L14.9,13.95 L14.9,11.6 L13.95,10.85 L13,10.5 L14.15,8.9 Z"/></g></svg><div class="t" style="left:273px;top:184px;height:19px;line-height:19px;text-align:left;font-size:12.25px;color:#000">Fundações</div><div class="t" style="left:1663px;top:184px;height:19px;line-height:19px;width:60px;text-align:right;font-size:12.25px;color:#000">1,000</div><div class="t" style="left:1726px;top:184px;height:19px;line-height:19px;width:81px;text-align:right;font-size:12.25px;color:#000">38.477,83</div><div class="t" style="left:1811px;top:184px;height:19px;line-height:19px;width:78px;text-align:right;font-size:12.25px;color:#000">38.477,83</div><svg style="position:absolute;left:32px;top:201px" width="20" height="20" viewBox="0 0 20 20" shape-rendering="crispEdges"><g shape-rendering="auto"><path d="M5,4 H10 L11,6 H16 L17,8 V14 L16,15.5 H4 L2,14 V7 L3,5.5 Z" fill="#b07a08"/><path d="M5.5,5 H9.6 L10.5,7 H15.5 L16,8 V13.5 L15.5,14.5 H4.5 L3,13.5 V7.5 L4,6 Z" fill="#f8e08a"/><path d="M4,8 H15.5 V13.5 H4 Z" fill="#f5da78"/><path d="M3,14 H16.5 V15.3 H3 Z" fill="#c08a10"/></g><rect x="8" y="10" width="5" height="1.5" fill="#4a3000"/></svg><div class="t" style="left:57px;top:202px;height:19px;line-height:19px;text-align:left;font-size:12.25px;color:#000">CR</div><svg style="position:absolute;left:174px;top:201px" width="20" height="20" viewBox="0 0 20 20" shape-rendering="crispEdges"><g shape-rendering="auto"><path d="M4,3 H13 L14,4 L15,5 V12 H18 V14 L17,15 L16,16 H7 L6,15 L5,14 V8 H2 V5 L3,4 H4 Z" fill="#004a10"/><path d="M5,4 H13 L14,5 V12 H9 V14 H7 L6,13 V4 Z" fill="#58f088"/><path d="M3,5 H5 V7 H3 Z" fill="#60e070"/><path d="M10,13 H17 L16,14 L15,15 H9 Z" fill="#70d060"/><path d="M7,6 H13 V7 H7 Z M7,8 H13 V9 H7 Z M7,10 H13 V11 H7 Z" fill="#003a00"/></g></svg><svg style="position:absolute;left:221px;top:201px" width="20" height="20" viewBox="0 0 20 20" shape-rendering="crispEdges"><g fill="#0a8a0a" shape-rendering="auto"><path d="M7.07,1.94 L12.8,1.94 L13.2,2.9 L14.9,2.9 L15.3,1.94 L16,1.94 L16,6.8 L11.05,6.8 L11.05,6.2 L11.8,5.6 L11.8,4.65 L11.05,3.88 L9.1,3.88 L8.5,4.65 L7.75,5.8 L6.8,6.8 L5.2,6.8 L3.9,5.4 L5.04,4.07 L6,3.1 Z"/><path d="M1.94,7.95 L6.98,7.95 L6.98,12.6 L5.8,12.6 L5.4,12 L4.85,12 L4.85,13.95 L8.9,13.95 L8.9,16.86 L4.26,16.86 L3.1,15.5 L1.94,14.7 L1.94,11.2 L2.9,11.05 L2.9,9.1 L1.94,8.7 Z"/><path d="M15.5,7.95 L16.86,9.7 L17.8,10.3 L17.8,14.7 L16.7,15.5 L15.7,16.86 L12.8,16.86 L12.4,18 L10.1,15.5 L10.85,14.34 L12.4,13 L13.2,13.95 L14.9,13.95 L14.9,11.6 L13.95,10.85 L13,10.5 L14.15,8.9 Z"/></g></svg><div class="t" style="left:281px;top:202px;height:19px;line-height:19px;text-align:left;font-size:12.25px;color:#000">Regularização</div><div class="t" style="left:1663px;top:202px;height:19px;line-height:19px;width:60px;text-align:right;font-size:12.25px;color:#000">1,000</div><div class="t" style="left:1726px;top:202px;height:19px;line-height:19px;width:81px;text-align:right;font-size:12.25px;color:#000">2.434,68</div><div class="t" style="left:1811px;top:202px;height:19px;line-height:19px;width:78px;text-align:right;font-size:12.25px;color:#000">2.434,68</div><svg style="position:absolute;left:40px;top:219px" width="20" height="20" viewBox="0 0 20 20" shape-rendering="crispEdges"><rect x="3" y="5" width="15" height="11" fill="#303050"/><rect x="2" y="4" width="15" height="11" fill="#000060"/><rect x="3" y="5" width="13" height="2" fill="#1838ff"/><rect x="3" y="8" width="13" height="6" fill="#fbe68a"/><path d="M9,8 H10 V10 L12,11 L13,12 L11,12 V14 H10 L9,12 L7,11 L7.5,10 Z" fill="#000060" shape-rendering="auto"/></svg><div class="t" style="left:65px;top:220px;height:19px;line-height:19px;text-align:left;font-size:12.25px;color:#0c0c8c">CRL035</div><svg style="position:absolute;left:182px;top:219px" width="20" height="20" viewBox="0 0 20 20" shape-rendering="crispEdges"><g shape-rendering="auto"><path d="M4,3 H13 L14,4 L15,5 V13 H18 V14.5 L17,15.5 L16,16.5 H7 L6,15.5 L5,14.5 V8 H2 V5 L3,4 H4 Z" fill="#000"/><path d="M5,4 H13 L14,5 V13 H9 V15 H7 L6,14 V4 Z" fill="#1010ff"/><circle cx="10.6" cy="8.6" r="4.3" fill="#ffff20"/><path d="M8.2,6 H9.2 V11 H8.2 Z M9,5 H12 V6 H9 Z M7,7.2 H11 V8 H7 Z M7,9.2 H11 V10 H7 Z M9,11 H12 V12 H9 Z" fill="#ff0000"/><path d="M3,5 H5 V7 H3 Z" fill="#c0c0c0"/><path d="M9.5,13.5 H17 L16,15.5 H9 Z" fill="#b8b040"/><path d="M9,15 H16 V15.6 H9 Z" fill="#d8d8d8"/></g></svg><svg style="position:absolute;left:204px;top:219px" width="20" height="20" viewBox="0 0 20 20" shape-rendering="crispEdges"><g shape-rendering="auto"><path d="M11,2 H13 L14.5,8 L15,11.5 L17.5,12.5 L18,14 L15,16 L12.5,15 L10.5,8 Z" fill="#ff6010"/><path d="M11,2 H13 L13.3,3.5 H10.8 Z" fill="#902000"/><path d="M10.6,4.2 H13.5 L13.7,5 H10.5 Z M10.3,7 H14 L14.3,8 H10.2 Z M11.5,10 H14.8 L15,12 H12 Z" fill="#fff"/><path d="M10.2,3 L9.8,8 M14.5,4 L15.2,10" stroke="#9aa8b8" stroke-width="0.6" fill="none"/><path d="M3,13 C3,9 5,7.5 8,7.5 C10.5,7.5 12.5,9.5 13,12.5 L14,15.5 L12,17.5 L8,17 L4,15.5 Z" fill="#f0f000" stroke="#6a6a00" stroke-width="0.7"/><path d="M5,9.5 L8,9 M9,10 L10,13 M11,14 L11,16 M4.5,12.5 L6,12" stroke="#8a8a00" stroke-width="0.9"/></g></svg><svg style="position:absolute;left:229px;top:219px" width="20" height="20" viewBox="0 0 20 20" shape-rendering="crispEdges"><g fill="#0a8a0a" shape-rendering="auto"><path d="M7.07,1.94 L12.8,1.94 L13.2,2.9 L14.9,2.9 L15.3,1.94 L16,1.94 L16,6.8 L11.05,6.8 L11.05,6.2 L11.8,5.6 L11.8,4.65 L11.05,3.88 L9.1,3.88 L8.5,4.65 L7.75,5.8 L6.8,6.8 L5.2,6.8 L3.9,5.4 L5.04,4.07 L6,3.1 Z"/><path d="M1.94,7.95 L6.98,7.95 L6.98,12.6 L5.8,12.6 L5.4,12 L4.85,12 L4.85,13.95 L8.9,13.95 L8.9,16.86 L4.26,16.86 L3.1,15.5 L1.94,14.7 L1.94,11.2 L2.9,11.05 L2.9,9.1 L1.94,8.7 Z"/><path d="M15.5,7.95 L16.86,9.7 L17.8,10.3 L17.8,14.7 L16.7,15.5 L15.7,16.86 L12.8,16.86 L12.4,18 L10.1,15.5 L10.85,14.34 L12.4,13 L13.2,13.95 L14.9,13.95 L14.9,11.6 L13.95,10.85 L13,10.5 L14.15,8.9 Z"/></g></svg><div class="t" style="left:258px;top:220px;height:19px;line-height:19px;text-align:left;font-size:12.25px;color:#0c0c8c">m²</div><div class="t" style="left:289px;top:220px;height:19px;line-height:19px;text-align:left;font-size:12.25px;color:#0c0c8c">Camada de betão de limpeza C12/15 (X0(P); D25; S3; Cl 1,0), fabricado em central e betonagem desde camião, de 10 cm de espessura.</div><div style="left:1664px;top:220px;width:63px;height:16px;background:linear-gradient(#eef8ee,#cdeccd)"></div><svg style="position:absolute;left:1665px;top:231px" width="4" height="4" viewBox="0 0 4 4" shape-rendering="crispEdges"><path d="M0 0L4 4H0z" fill="#8a0000"/></svg><div class="t" style="left:1663px;top:220px;height:19px;line-height:19px;width:60px;text-align:right;font-size:12.25px;color:#0c0c8c">249,200</div><div class="t" style="left:1726px;top:220px;height:19px;line-height:19px;width:81px;text-align:right;font-size:12.25px;color:#0c0c8c">9,77</div><div class="t" style="left:1811px;top:220px;height:19px;line-height:19px;width:78px;text-align:right;font-size:12.25px;color:#0c0c8c">2.434,68</div><svg style="position:absolute;left:40px;top:237px" width="20" height="20" viewBox="0 0 20 20" shape-rendering="crispEdges"><rect x="3" y="5" width="15" height="11" fill="#505050"/><rect x="2" y="4" width="15" height="11" fill="#000"/><rect x="3" y="5" width="13" height="2" fill="#1030ff"/><rect x="3" y="8" width="13" height="6" fill="#fff"/><path d="M8.5,8 H11 V10 H12.5 L9.75,13.5 L7,10 H8.5 Z" fill="#ff0000" shape-rendering="auto"/></svg><svg style="position:absolute;left:32px;top:255px" width="20" height="20" viewBox="0 0 20 20" shape-rendering="crispEdges"><g shape-rendering="auto"><path d="M5,4 H10 L11,6 H16 L17,8 V14 L16,15.5 H4 L2,14 V7 L3,5.5 Z" fill="#b07a08"/><path d="M5.5,5 H9.6 L10.5,7 H15.5 L16,8 V13.5 L15.5,14.5 H4.5 L3,13.5 V7.5 L4,6 Z" fill="#f8e08a"/><path d="M4,8 H15.5 V13.5 H4 Z" fill="#f5da78"/><path d="M3,14 H16.5 V15.3 H3 Z" fill="#c08a10"/></g><rect x="8" y="10" width="5" height="1.5" fill="#4a3000"/></svg><div class="t" style="left:57px;top:256px;height:19px;line-height:19px;text-align:left;font-size:12.25px;color:#000">CC</div><svg style="position:absolute;left:174px;top:255px" width="20" height="20" viewBox="0 0 20 20" shape-rendering="crispEdges"><g shape-rendering="auto"><path d="M4,3 H13 L14,4 L15,5 V12 H18 V14 L17,15 L16,16 H7 L6,15 L5,14 V8 H2 V5 L3,4 H4 Z" fill="#004a10"/><path d="M5,4 H13 L14,5 V12 H9 V14 H7 L6,13 V4 Z" fill="#58f088"/><path d="M3,5 H5 V7 H3 Z" fill="#60e070"/><path d="M10,13 H17 L16,14 L15,15 H9 Z" fill="#70d060"/><path d="M7,6 H13 V7 H7 Z M7,8 H13 V9 H7 Z M7,10 H13 V11 H7 Z" fill="#003a00"/></g></svg><svg style="position:absolute;left:221px;top:255px" width="20" height="20" viewBox="0 0 20 20" shape-rendering="crispEdges"><g fill="#0a8a0a" shape-rendering="auto"><path d="M7.07,1.94 L12.8,1.94 L13.2,2.9 L14.9,2.9 L15.3,1.94 L16,1.94 L16,6.8 L11.05,6.8 L11.05,6.2 L11.8,5.6 L11.8,4.65 L11.05,3.88 L9.1,3.88 L8.5,4.65 L7.75,5.8 L6.8,6.8 L5.2,6.8 L3.9,5.4 L5.04,4.07 L6,3.1 Z"/><path d="M1.94,7.95 L6.98,7.95 L6.98,12.6 L5.8,12.6 L5.4,12 L4.85,12 L4.85,13.95 L8.9,13.95 L8.9,16.86 L4.26,16.86 L3.1,15.5 L1.94,14.7 L1.94,11.2 L2.9,11.05 L2.9,9.1 L1.94,8.7 Z"/><path d="M15.5,7.95 L16.86,9.7 L17.8,10.3 L17.8,14.7 L16.7,15.5 L15.7,16.86 L12.8,16.86 L12.4,18 L10.1,15.5 L10.85,14.34 L12.4,13 L13.2,13.95 L14.9,13.95 L14.9,11.6 L13.95,10.85 L13,10.5 L14.15,8.9 Z"/></g></svg><div class="t" style="left:281px;top:256px;height:19px;line-height:19px;text-align:left;font-size:12.25px;color:#000">Contenções</div><div class="t" style="left:1663px;top:256px;height:19px;line-height:19px;width:60px;text-align:right;font-size:12.25px;color:#000">1,000</div><div class="t" style="left:1726px;top:256px;height:19px;line-height:19px;width:81px;text-align:right;font-size:12.25px;color:#000">13.225,53</div><div class="t" style="left:1811px;top:256px;height:19px;line-height:19px;width:78px;text-align:right;font-size:12.25px;color:#000">13.225,53</div><svg style="position:absolute;left:40px;top:273px" width="20" height="20" viewBox="0 0 20 20" shape-rendering="crispEdges"><rect x="3" y="5" width="15" height="11" fill="#303050"/><rect x="2" y="4" width="15" height="11" fill="#000060"/><rect x="3" y="5" width="13" height="2" fill="#1838ff"/><rect x="3" y="8" width="13" height="6" fill="#fbe68a"/><path d="M9,8 H10 V10 L12,11 L13,12 L11,12 V14 H10 L9,12 L7,11 L7.5,10 Z" fill="#000060" shape-rendering="auto"/></svg><div class="t" style="left:65px;top:274px;height:19px;line-height:19px;text-align:left;font-size:12.25px;color:#0c0c8c">CCS035</div><div class="t" style="left:143px;top:274px;height:19px;line-height:19px;text-align:left;font-size:11.5px;font-weight:bold;color:#0c0c8c">CCS</div><svg style="position:absolute;left:182px;top:273px" width="20" height="20" viewBox="0 0 20 20" shape-rendering="crispEdges"><g shape-rendering="auto"><path d="M4,3 H13 L14,4 L15,5 V13 H18 V14.5 L17,15.5 L16,16.5 H7 L6,15.5 L5,14.5 V8 H2 V5 L3,4 H4 Z" fill="#000"/><path d="M5,4 H13 L14,5 V13 H9 V15 H7 L6,14 V4 Z" fill="#1010ff"/><circle cx="10.6" cy="8.6" r="4.3" fill="#ffff20"/><path d="M8.2,6 H9.2 V11 H8.2 Z M9,5 H12 V6 H9 Z M7,7.2 H11 V8 H7 Z M7,9.2 H11 V10 H7 Z M9,11 H12 V12 H9 Z" fill="#ff0000"/><path d="M3,5 H5 V7 H3 Z" fill="#c0c0c0"/><path d="M9.5,13.5 H17 L16,15.5 H9 Z" fill="#b8b040"/><path d="M9,15 H16 V15.6 H9 Z" fill="#d8d8d8"/></g></svg><svg style="position:absolute;left:204px;top:273px" width="20" height="20" viewBox="0 0 20 20" shape-rendering="crispEdges"><g shape-rendering="auto"><path d="M11,2 H13 L14.5,8 L15,11.5 L17.5,12.5 L18,14 L15,16 L12.5,15 L10.5,8 Z" fill="#ff6010"/><path d="M11,2 H13 L13.3,3.5 H10.8 Z" fill="#902000"/><path d="M10.6,4.2 H13.5 L13.7,5 H10.5 Z M10.3,7 H14 L14.3,8 H10.2 Z M11.5,10 H14.8 L15,12 H12 Z" fill="#fff"/><path d="M10.2,3 L9.8,8 M14.5,4 L15.2,10" stroke="#9aa8b8" stroke-width="0.6" fill="none"/><path d="M3,13 C3,9 5,7.5 8,7.5 C10.5,7.5 12.5,9.5 13,12.5 L14,15.5 L12,17.5 L8,17 L4,15.5 Z" fill="#f0f000" stroke="#6a6a00" stroke-width="0.7"/><path d="M5,9.5 L8,9 M9,10 L10,13 M11,14 L11,16 M4.5,12.5 L6,12" stroke="#8a8a00" stroke-width="0.9"/></g></svg><svg style="position:absolute;left:229px;top:273px" width="20" height="20" viewBox="0 0 20 20" shape-rendering="crispEdges"><g fill="#0a8a0a" shape-rendering="auto"><path d="M7.07,1.94 L12.8,1.94 L13.2,2.9 L14.9,2.9 L15.3,1.94 L16,1.94 L16,6.8 L11.05,6.8 L11.05,6.2 L11.8,5.6 L11.8,4.65 L11.05,3.88 L9.1,3.88 L8.5,4.65 L7.75,5.8 L6.8,6.8 L5.2,6.8 L3.9,5.4 L5.04,4.07 L6,3.1 Z"/><path d="M1.94,7.95 L6.98,7.95 L6.98,12.6 L5.8,12.6 L5.4,12 L4.85,12 L4.85,13.95 L8.9,13.95 L8.9,16.86 L4.26,16.86 L3.1,15.5 L1.94,14.7 L1.94,11.2 L2.9,11.05 L2.9,9.1 L1.94,8.7 Z"/><path d="M15.5,7.95 L16.86,9.7 L17.8,10.3 L17.8,14.7 L16.7,15.5 L15.7,16.86 L12.8,16.86 L12.4,18 L10.1,15.5 L10.85,14.34 L12.4,13 L13.2,13.95 L14.9,13.95 L14.9,11.6 L13.95,10.85 L13,10.5 L14.15,8.9 Z"/></g></svg><div class="t" style="left:258px;top:274px;height:19px;line-height:19px;text-align:left;font-size:12.25px;color:#0c0c8c">m³</div><div class="t" style="left:289px;top:274px;height:19px;line-height:19px;text-align:left;font-size:12.25px;color:#0c0c8c">Muro de cave de betão armado, realizado com betão C25/30 (X0(P); D25; S3; Cl 0,4) fabricado em central, e betonagem desde camião, e aço A400 NR, quantidade 44,5 kg/m³.</div><div style="left:1664px;top:274px;width:63px;height:16px;background:linear-gradient(#eef8ee,#cdeccd)"></div><svg style="position:absolute;left:1665px;top:285px" width="4" height="4" viewBox="0 0 4 4" shape-rendering="crispEdges"><path d="M0 0L4 4H0z" fill="#8a0000"/></svg><div class="t" style="left:1663px;top:274px;height:19px;line-height:19px;width:60px;text-align:right;font-size:12.25px;color:#0c0c8c">86,930</div><div class="t" style="left:1726px;top:274px;height:19px;line-height:19px;width:81px;text-align:right;font-size:12.25px;color:#0c0c8c">152,14</div><div class="t" style="left:1811px;top:274px;height:19px;line-height:19px;width:78px;text-align:right;font-size:12.25px;color:#0c0c8c">13.225,53</div><svg style="position:absolute;left:40px;top:291px" width="20" height="20" viewBox="0 0 20 20" shape-rendering="crispEdges"><rect x="3" y="5" width="15" height="11" fill="#505050"/><rect x="2" y="4" width="15" height="11" fill="#000"/><rect x="3" y="5" width="13" height="2" fill="#1030ff"/><rect x="3" y="8" width="13" height="6" fill="#fff"/><path d="M8.5,8 H11 V10 H12.5 L9.75,13.5 L7,10 H8.5 Z" fill="#ff0000" shape-rendering="auto"/></svg><svg style="position:absolute;left:32px;top:309px" width="20" height="20" viewBox="0 0 20 20" shape-rendering="crispEdges"><g shape-rendering="auto"><path d="M5,4 H10 L11,6 H16 L17,8 V14 L16,15.5 H4 L2,14 V7 L3,5.5 Z" fill="#b07a08"/><path d="M5.5,5 H9.6 L10.5,7 H15.5 L16,8 V13.5 L15.5,14.5 H4.5 L3,13.5 V7.5 L4,6 Z" fill="#f8e08a"/><path d="M4,8 H15.5 V13.5 H4 Z" fill="#f5da78"/><path d="M3,14 H16.5 V15.3 H3 Z" fill="#c08a10"/></g><rect x="8" y="10" width="5" height="1.5" fill="#4a3000"/></svg><div class="t" style="left:57px;top:310px;height:19px;line-height:19px;text-align:left;font-size:12.25px;color:#000">CS</div><svg style="position:absolute;left:174px;top:309px" width="20" height="20" viewBox="0 0 20 20" shape-rendering="crispEdges"><g shape-rendering="auto"><path d="M4,3 H13 L14,4 L15,5 V12 H18 V14 L17,15 L16,16 H7 L6,15 L5,14 V8 H2 V5 L3,4 H4 Z" fill="#004a10"/><path d="M5,4 H13 L14,5 V12 H9 V14 H7 L6,13 V4 Z" fill="#58f088"/><path d="M3,5 H5 V7 H3 Z" fill="#60e070"/><path d="M10,13 H17 L16,14 L15,15 H9 Z" fill="#70d060"/><path d="M7,6 H13 V7 H7 Z M7,8 H13 V9 H7 Z M7,10 H13 V11 H7 Z" fill="#003a00"/></g></svg><svg style="position:absolute;left:221px;top:309px" width="20" height="20" viewBox="0 0 20 20" shape-rendering="crispEdges"><g fill="#0a8a0a" shape-rendering="auto"><path d="M7.07,1.94 L12.8,1.94 L13.2,2.9 L14.9,2.9 L15.3,1.94 L16,1.94 L16,6.8 L11.05,6.8 L11.05,6.2 L11.8,5.6 L11.8,4.65 L11.05,3.88 L9.1,3.88 L8.5,4.65 L7.75,5.8 L6.8,6.8 L5.2,6.8 L3.9,5.4 L5.04,4.07 L6,3.1 Z"/><path d="M1.94,7.95 L6.98,7.95 L6.98,12.6 L5.8,12.6 L5.4,12 L4.85,12 L4.85,13.95 L8.9,13.95 L8.9,16.86 L4.26,16.86 L3.1,15.5 L1.94,14.7 L1.94,11.2 L2.9,11.05 L2.9,9.1 L1.94,8.7 Z"/><path d="M15.5,7.95 L16.86,9.7 L17.8,10.3 L17.8,14.7 L16.7,15.5 L15.7,16.86 L12.8,16.86 L12.4,18 L10.1,15.5 L10.85,14.34 L12.4,13 L13.2,13.95 L14.9,13.95 L14.9,11.6 L13.95,10.85 L13,10.5 L14.15,8.9 Z"/></g></svg><div class="t" style="left:281px;top:310px;height:19px;line-height:19px;text-align:left;font-size:12.25px;color:#000">Superficiais</div><div class="t" style="left:1663px;top:310px;height:19px;line-height:19px;width:60px;text-align:right;font-size:12.25px;color:#000">1,000</div><div class="t" style="left:1726px;top:310px;height:19px;line-height:19px;width:81px;text-align:right;font-size:12.25px;color:#000">17.736,93</div><div class="t" style="left:1811px;top:310px;height:19px;line-height:19px;width:78px;text-align:right;font-size:12.25px;color:#000">17.736,93</div><svg style="position:absolute;left:40px;top:327px" width="20" height="20" viewBox="0 0 20 20" shape-rendering="crispEdges"><rect x="3" y="5" width="15" height="11" fill="#303050"/><rect x="2" y="4" width="15" height="11" fill="#000060"/><rect x="3" y="5" width="13" height="2" fill="#1838ff"/><rect x="3" y="8" width="13" height="6" fill="#fbe68a"/><path d="M9,8 H10 V10 L12,11 L13,12 L11,12 V14 H10 L9,12 L7,11 L7.5,10 Z" fill="#000060" shape-rendering="auto"/></svg><div class="t" style="left:65px;top:328px;height:19px;line-height:19px;text-align:left;font-size:12.25px;color:#0c0c8c">CSZ035</div><div class="t" style="left:143px;top:328px;height:19px;line-height:19px;text-align:left;font-size:11.5px;font-weight:bold;color:#0c0c8c">CSZ</div><svg style="position:absolute;left:182px;top:327px" width="20" height="20" viewBox="0 0 20 20" shape-rendering="crispEdges"><g shape-rendering="auto"><path d="M4,3 H13 L14,4 L15,5 V13 H18 V14.5 L17,15.5 L16,16.5 H7 L6,15.5 L5,14.5 V8 H2 V5 L3,4 H4 Z" fill="#000"/><path d="M5,4 H13 L14,5 V13 H9 V15 H7 L6,14 V4 Z" fill="#1010ff"/><circle cx="10.6" cy="8.6" r="4.3" fill="#ffff20"/><path d="M8.2,6 H9.2 V11 H8.2 Z M9,5 H12 V6 H9 Z M7,7.2 H11 V8 H7 Z M7,9.2 H11 V10 H7 Z M9,11 H12 V12 H9 Z" fill="#ff0000"/><path d="M3,5 H5 V7 H3 Z" fill="#c0c0c0"/><path d="M9.5,13.5 H17 L16,15.5 H9 Z" fill="#b8b040"/><path d="M9,15 H16 V15.6 H9 Z" fill="#d8d8d8"/></g></svg><svg style="position:absolute;left:204px;top:327px" width="20" height="20" viewBox="0 0 20 20" shape-rendering="crispEdges"><g shape-rendering="auto"><path d="M11,2 H13 L14.5,8 L15,11.5 L17.5,12.5 L18,14 L15,16 L12.5,15 L10.5,8 Z" fill="#ff6010"/><path d="M11,2 H13 L13.3,3.5 H10.8 Z" fill="#902000"/><path d="M10.6,4.2 H13.5 L13.7,5 H10.5 Z M10.3,7 H14 L14.3,8 H10.2 Z M11.5,10 H14.8 L15,12 H12 Z" fill="#fff"/><path d="M10.2,3 L9.8,8 M14.5,4 L15.2,10" stroke="#9aa8b8" stroke-width="0.6" fill="none"/><path d="M3,13 C3,9 5,7.5 8,7.5 C10.5,7.5 12.5,9.5 13,12.5 L14,15.5 L12,17.5 L8,17 L4,15.5 Z" fill="#f0f000" stroke="#6a6a00" stroke-width="0.7"/><path d="M5,9.5 L8,9 M9,10 L10,13 M11,14 L11,16 M4.5,12.5 L6,12" stroke="#8a8a00" stroke-width="0.9"/></g></svg><svg style="position:absolute;left:229px;top:327px" width="20" height="20" viewBox="0 0 20 20" shape-rendering="crispEdges"><g fill="#0a8a0a" shape-rendering="auto"><path d="M7.07,1.94 L12.8,1.94 L13.2,2.9 L14.9,2.9 L15.3,1.94 L16,1.94 L16,6.8 L11.05,6.8 L11.05,6.2 L11.8,5.6 L11.8,4.65 L11.05,3.88 L9.1,3.88 L8.5,4.65 L7.75,5.8 L6.8,6.8 L5.2,6.8 L3.9,5.4 L5.04,4.07 L6,3.1 Z"/><path d="M1.94,7.95 L6.98,7.95 L6.98,12.6 L5.8,12.6 L5.4,12 L4.85,12 L4.85,13.95 L8.9,13.95 L8.9,16.86 L4.26,16.86 L3.1,15.5 L1.94,14.7 L1.94,11.2 L2.9,11.05 L2.9,9.1 L1.94,8.7 Z"/><path d="M15.5,7.95 L16.86,9.7 L17.8,10.3 L17.8,14.7 L16.7,15.5 L15.7,16.86 L12.8,16.86 L12.4,18 L10.1,15.5 L10.85,14.34 L12.4,13 L13.2,13.95 L14.9,13.95 L14.9,11.6 L13.95,10.85 L13,10.5 L14.15,8.9 Z"/></g></svg><div class="t" style="left:258px;top:328px;height:19px;line-height:19px;text-align:left;font-size:12.25px;color:#0c0c8c">m³</div><div class="t" style="left:289px;top:328px;height:19px;line-height:19px;text-align:left;font-size:12.25px;color:#0c0c8c">Sapata de betão armado, realizada com betão C25/30 (X0(P); D25; S3; Cl 0,4) fabricado em central, e betonagem desde camião, e aço A400 NR, quantidade 66,4 kg/m³.</div><div style="left:1664px;top:328px;width:63px;height:16px;background:linear-gradient(#eef8ee,#cdeccd)"></div><svg style="position:absolute;left:1665px;top:339px" width="4" height="4" viewBox="0 0 4 4" shape-rendering="crispEdges"><path d="M0 0L4 4H0z" fill="#8a0000"/></svg><svg style="position:absolute;left:1722px;top:339px" width="4" height="4" viewBox="0 0 4 4" shape-rendering="crispEdges"><path d="M4 0V4H0z" fill="#008000"/></svg><div class="t" style="left:1663px;top:328px;height:19px;line-height:19px;width:60px;text-align:right;font-size:12.25px;color:#0c0c8c">74,118</div><div class="t" style="left:1726px;top:328px;height:19px;line-height:19px;width:81px;text-align:right;font-size:12.25px;color:#0c0c8c">171,95</div><div class="t" style="left:1811px;top:328px;height:19px;line-height:19px;width:78px;text-align:right;font-size:12.25px;color:#0c0c8c">12.744,59</div><svg style="position:absolute;left:40px;top:345px" width="20" height="20" viewBox="0 0 20 20" shape-rendering="crispEdges"><rect x="3" y="5" width="15" height="11" fill="#303050"/><rect x="2" y="4" width="15" height="11" fill="#000060"/><rect x="3" y="5" width="13" height="2" fill="#1838ff"/><rect x="3" y="8" width="13" height="6" fill="#fbe68a"/><path d="M9,8 H10 V10 L12,11 L13,12 L11,12 V14 H10 L9,12 L7,11 L7.5,10 Z" fill="#000060" shape-rendering="auto"/></svg><div class="t" style="left:65px;top:346px;height:19px;line-height:19px;text-align:left;font-size:12.25px;color:#0c0c8c">CSZ035b</div><div class="t" style="left:143px;top:346px;height:19px;line-height:19px;text-align:left;font-size:11.5px;font-weight:bold;color:#0c0c8c">CSZ</div><svg style="position:absolute;left:182px;top:345px" width="20" height="20" viewBox="0 0 20 20" shape-rendering="crispEdges"><g shape-rendering="auto"><path d="M4,3 H13 L14,4 L15,5 V13 H18 V14.5 L17,15.5 L16,16.5 H7 L6,15.5 L5,14.5 V8 H2 V5 L3,4 H4 Z" fill="#000"/><path d="M5,4 H13 L14,5 V13 H9 V15 H7 L6,14 V4 Z" fill="#1010ff"/><circle cx="10.6" cy="8.6" r="4.3" fill="#ffff20"/><path d="M8.2,6 H9.2 V11 H8.2 Z M9,5 H12 V6 H9 Z M7,7.2 H11 V8 H7 Z M7,9.2 H11 V10 H7 Z M9,11 H12 V12 H9 Z" fill="#ff0000"/><path d="M3,5 H5 V7 H3 Z" fill="#c0c0c0"/><path d="M9.5,13.5 H17 L16,15.5 H9 Z" fill="#b8b040"/><path d="M9,15 H16 V15.6 H9 Z" fill="#d8d8d8"/></g></svg><svg style="position:absolute;left:204px;top:345px" width="20" height="20" viewBox="0 0 20 20" shape-rendering="crispEdges"><g shape-rendering="auto"><path d="M11,2 H13 L14.5,8 L15,11.5 L17.5,12.5 L18,14 L15,16 L12.5,15 L10.5,8 Z" fill="#ff6010"/><path d="M11,2 H13 L13.3,3.5 H10.8 Z" fill="#902000"/><path d="M10.6,4.2 H13.5 L13.7,5 H10.5 Z M10.3,7 H14 L14.3,8 H10.2 Z M11.5,10 H14.8 L15,12 H12 Z" fill="#fff"/><path d="M10.2,3 L9.8,8 M14.5,4 L15.2,10" stroke="#9aa8b8" stroke-width="0.6" fill="none"/><path d="M3,13 C3,9 5,7.5 8,7.5 C10.5,7.5 12.5,9.5 13,12.5 L14,15.5 L12,17.5 L8,17 L4,15.5 Z" fill="#f0f000" stroke="#6a6a00" stroke-width="0.7"/><path d="M5,9.5 L8,9 M9,10 L10,13 M11,14 L11,16 M4.5,12.5 L6,12" stroke="#8a8a00" stroke-width="0.9"/></g></svg><svg style="position:absolute;left:229px;top:345px" width="20" height="20" viewBox="0 0 20 20" shape-rendering="crispEdges"><g fill="#0a8a0a" shape-rendering="auto"><path d="M7.07,1.94 L12.8,1.94 L13.2,2.9 L14.9,2.9 L15.3,1.94 L16,1.94 L16,6.8 L11.05,6.8 L11.05,6.2 L11.8,5.6 L11.8,4.65 L11.05,3.88 L9.1,3.88 L8.5,4.65 L7.75,5.8 L6.8,6.8 L5.2,6.8 L3.9,5.4 L5.04,4.07 L6,3.1 Z"/><path d="M1.94,7.95 L6.98,7.95 L6.98,12.6 L5.8,12.6 L5.4,12 L4.85,12 L4.85,13.95 L8.9,13.95 L8.9,16.86 L4.26,16.86 L3.1,15.5 L1.94,14.7 L1.94,11.2 L2.9,11.05 L2.9,9.1 L1.94,8.7 Z"/><path d="M15.5,7.95 L16.86,9.7 L17.8,10.3 L17.8,14.7 L16.7,15.5 L15.7,16.86 L12.8,16.86 L12.4,18 L10.1,15.5 L10.85,14.34 L12.4,13 L13.2,13.95 L14.9,13.95 L14.9,11.6 L13.95,10.85 L13,10.5 L14.15,8.9 Z"/></g></svg><div class="t" style="left:258px;top:346px;height:19px;line-height:19px;text-align:left;font-size:12.25px;color:#0c0c8c">m³</div><div class="t" style="left:289px;top:346px;height:19px;line-height:19px;text-align:left;font-size:12.25px;color:#0c0c8c">Sapata de betão armado, realizada com betão C25/30 (X0(P); D25; S3; Cl 0,4) fabricado em central, e betonagem desde camião, e aço A400 NR, quantidade 66,4 kg/m³.</div><div style="left:1664px;top:346px;width:63px;height:16px;background:linear-gradient(#eef8ee,#cdeccd)"></div><svg style="position:absolute;left:1665px;top:357px" width="4" height="4" viewBox="0 0 4 4" shape-rendering="crispEdges"><path d="M0 0L4 4H0z" fill="#8a0000"/></svg><div class="t" style="left:1663px;top:346px;height:19px;line-height:19px;width:60px;text-align:right;font-size:12.25px;color:#0c0c8c">28,110</div><div class="t" style="left:1726px;top:346px;height:19px;line-height:19px;width:81px;text-align:right;font-size:12.25px;color:#0c0c8c">177,60</div><div class="t" style="left:1811px;top:346px;height:19px;line-height:19px;width:78px;text-align:right;font-size:12.25px;color:#0c0c8c">4.992,34</div><svg style="position:absolute;left:40px;top:363px" width="20" height="20" viewBox="0 0 20 20" shape-rendering="crispEdges"><rect x="3" y="5" width="15" height="11" fill="#505050"/><rect x="2" y="4" width="15" height="11" fill="#000"/><rect x="3" y="5" width="13" height="2" fill="#1030ff"/><rect x="3" y="8" width="13" height="6" fill="#fff"/><path d="M8.5,8 H11 V10 H12.5 L9.75,13.5 L7,10 H8.5 Z" fill="#ff0000" shape-rendering="auto"/></svg><svg style="position:absolute;left:32px;top:381px" width="20" height="20" viewBox="0 0 20 20" shape-rendering="crispEdges"><g shape-rendering="auto"><path d="M5,4 H10 L11,6 H16 L17,8 V14 L16,15.5 H4 L2,14 V7 L3,5.5 Z" fill="#b07a08"/><path d="M5.5,5 H9.6 L10.5,7 H15.5 L16,8 V13.5 L15.5,14.5 H4.5 L3,13.5 V7.5 L4,6 Z" fill="#f8e08a"/><path d="M4,8 H15.5 V13.5 H4 Z" fill="#f5da78"/><path d="M3,14 H16.5 V15.3 H3 Z" fill="#c08a10"/></g><rect x="8" y="10" width="5" height="1.5" fill="#4a3000"/></svg><div class="t" style="left:57px;top:382px;height:19px;line-height:19px;text-align:left;font-size:12.25px;color:#000">CA</div><svg style="position:absolute;left:174px;top:381px" width="20" height="20" viewBox="0 0 20 20" shape-rendering="crispEdges"><g shape-rendering="auto"><path d="M4,3 H13 L14,4 L15,5 V12 H18 V14 L17,15 L16,16 H7 L6,15 L5,14 V8 H2 V5 L3,4 H4 Z" fill="#004a10"/><path d="M5,4 H13 L14,5 V12 H9 V14 H7 L6,13 V4 Z" fill="#58f088"/><path d="M3,5 H5 V7 H3 Z" fill="#60e070"/><path d="M10,13 H17 L16,14 L15,15 H9 Z" fill="#70d060"/><path d="M7,6 H13 V7 H7 Z M7,8 H13 V9 H7 Z M7,10 H13 V11 H7 Z" fill="#003a00"/></g></svg><svg style="position:absolute;left:221px;top:381px" width="20" height="20" viewBox="0 0 20 20" shape-rendering="crispEdges"><g fill="#0a8a0a" shape-rendering="auto"><path d="M7.07,1.94 L12.8,1.94 L13.2,2.9 L14.9,2.9 L15.3,1.94 L16,1.94 L16,6.8 L11.05,6.8 L11.05,6.2 L11.8,5.6 L11.8,4.65 L11.05,3.88 L9.1,3.88 L8.5,4.65 L7.75,5.8 L6.8,6.8 L5.2,6.8 L3.9,5.4 L5.04,4.07 L6,3.1 Z"/><path d="M1.94,7.95 L6.98,7.95 L6.98,12.6 L5.8,12.6 L5.4,12 L4.85,12 L4.85,13.95 L8.9,13.95 L8.9,16.86 L4.26,16.86 L3.1,15.5 L1.94,14.7 L1.94,11.2 L2.9,11.05 L2.9,9.1 L1.94,8.7 Z"/><path d="M15.5,7.95 L16.86,9.7 L17.8,10.3 L17.8,14.7 L16.7,15.5 L15.7,16.86 L12.8,16.86 L12.4,18 L10.1,15.5 L10.85,14.34 L12.4,13 L13.2,13.95 L14.9,13.95 L14.9,11.6 L13.95,10.85 L13,10.5 L14.15,8.9 Z"/></g></svg><div class="t" style="left:281px;top:382px;height:19px;line-height:19px;text-align:left;font-size:12.25px;color:#000">Vigas de fundação</div><div class="t" style="left:1663px;top:382px;height:19px;line-height:19px;width:60px;text-align:right;font-size:12.25px;color:#000">1,000</div><div class="t" style="left:1726px;top:382px;height:19px;line-height:19px;width:81px;text-align:right;font-size:12.25px;color:#000">5.080,69</div><div class="t" style="left:1811px;top:382px;height:19px;line-height:19px;width:78px;text-align:right;font-size:12.25px;color:#000">5.080,69</div><svg style="position:absolute;left:40px;top:399px" width="20" height="20" viewBox="0 0 20 20" shape-rendering="crispEdges"><rect x="3" y="5" width="15" height="11" fill="#303050"/><rect x="2" y="4" width="15" height="11" fill="#000060"/><rect x="3" y="5" width="13" height="2" fill="#1838ff"/><rect x="3" y="8" width="13" height="6" fill="#fbe68a"/><path d="M9,8 H10 V10 L12,11 L13,12 L11,12 V14 H10 L9,12 L7,11 L7.5,10 Z" fill="#000060" shape-rendering="auto"/></svg><div class="t" style="left:65px;top:400px;height:19px;line-height:19px;text-align:left;font-size:12.25px;color:#0c0c8c">CAV035</div><div class="t" style="left:143px;top:400px;height:19px;line-height:19px;text-align:left;font-size:11.5px;font-weight:bold;color:#0c0c8c">CAV</div><svg style="position:absolute;left:182px;top:399px" width="20" height="20" viewBox="0 0 20 20" shape-rendering="crispEdges"><g shape-rendering="auto"><path d="M4,3 H13 L14,4 L15,5 V13 H18 V14.5 L17,15.5 L16,16.5 H7 L6,15.5 L5,14.5 V8 H2 V5 L3,4 H4 Z" fill="#000"/><path d="M5,4 H13 L14,5 V13 H9 V15 H7 L6,14 V4 Z" fill="#1010ff"/><circle cx="10.6" cy="8.6" r="4.3" fill="#ffff20"/><path d="M8.2,6 H9.2 V11 H8.2 Z M9,5 H12 V6 H9 Z M7,7.2 H11 V8 H7 Z M7,9.2 H11 V10 H7 Z M9,11 H12 V12 H9 Z" fill="#ff0000"/><path d="M3,5 H5 V7 H3 Z" fill="#c0c0c0"/><path d="M9.5,13.5 H17 L16,15.5 H9 Z" fill="#b8b040"/><path d="M9,15 H16 V15.6 H9 Z" fill="#d8d8d8"/></g></svg><svg style="position:absolute;left:204px;top:399px" width="20" height="20" viewBox="0 0 20 20" shape-rendering="crispEdges"><g shape-rendering="auto"><path d="M11,2 H13 L14.5,8 L15,11.5 L17.5,12.5 L18,14 L15,16 L12.5,15 L10.5,8 Z" fill="#ff6010"/><path d="M11,2 H13 L13.3,3.5 H10.8 Z" fill="#902000"/><path d="M10.6,4.2 H13.5 L13.7,5 H10.5 Z M10.3,7 H14 L14.3,8 H10.2 Z M11.5,10 H14.8 L15,12 H12 Z" fill="#fff"/><path d="M10.2,3 L9.8,8 M14.5,4 L15.2,10" stroke="#9aa8b8" stroke-width="0.6" fill="none"/><path d="M3,13 C3,9 5,7.5 8,7.5 C10.5,7.5 12.5,9.5 13,12.5 L14,15.5 L12,17.5 L8,17 L4,15.5 Z" fill="#f0f000" stroke="#6a6a00" stroke-width="0.7"/><path d="M5,9.5 L8,9 M9,10 L10,13 M11,14 L11,16 M4.5,12.5 L6,12" stroke="#8a8a00" stroke-width="0.9"/></g></svg><svg style="position:absolute;left:229px;top:399px" width="20" height="20" viewBox="0 0 20 20" shape-rendering="crispEdges"><g fill="#0a8a0a" shape-rendering="auto"><path d="M7.07,1.94 L12.8,1.94 L13.2,2.9 L14.9,2.9 L15.3,1.94 L16,1.94 L16,6.8 L11.05,6.8 L11.05,6.2 L11.8,5.6 L11.8,4.65 L11.05,3.88 L9.1,3.88 L8.5,4.65 L7.75,5.8 L6.8,6.8 L5.2,6.8 L3.9,5.4 L5.04,4.07 L6,3.1 Z"/><path d="M1.94,7.95 L6.98,7.95 L6.98,12.6 L5.8,12.6 L5.4,12 L4.85,12 L4.85,13.95 L8.9,13.95 L8.9,16.86 L4.26,16.86 L3.1,15.5 L1.94,14.7 L1.94,11.2 L2.9,11.05 L2.9,9.1 L1.94,8.7 Z"/><path d="M15.5,7.95 L16.86,9.7 L17.8,10.3 L17.8,14.7 L16.7,15.5 L15.7,16.86 L12.8,16.86 L12.4,18 L10.1,15.5 L10.85,14.34 L12.4,13 L13.2,13.95 L14.9,13.95 L14.9,11.6 L13.95,10.85 L13,10.5 L14.15,8.9 Z"/></g></svg><div class="t" style="left:258px;top:400px;height:19px;line-height:19px;text-align:left;font-size:12.25px;color:#0c0c8c">m³</div><div class="t" style="left:289px;top:400px;height:19px;line-height:19px;text-align:left;font-size:12.25px;color:#0c0c8c">Lintel de betão armado, realizada com betão C25/30 (X0(P); D25; S3; Cl 0,4) fabricado em central, e betonagem desde camião, e aço A400 NR, quantidade 120 kg/m³.</div><div style="left:1664px;top:400px;width:63px;height:16px;background:linear-gradient(#eef8ee,#cdeccd)"></div><svg style="position:absolute;left:1665px;top:411px" width="4" height="4" viewBox="0 0 4 4" shape-rendering="crispEdges"><path d="M0 0L4 4H0z" fill="#8a0000"/></svg><svg style="position:absolute;left:1722px;top:411px" width="4" height="4" viewBox="0 0 4 4" shape-rendering="crispEdges"><path d="M4 0V4H0z" fill="#008000"/></svg><div class="t" style="left:1663px;top:400px;height:19px;line-height:19px;width:60px;text-align:right;font-size:12.25px;color:#0c0c8c">18,170</div><div class="t" style="left:1726px;top:400px;height:19px;line-height:19px;width:81px;text-align:right;font-size:12.25px;color:#0c0c8c">198,99</div><div class="t" style="left:1811px;top:400px;height:19px;line-height:19px;width:78px;text-align:right;font-size:12.25px;color:#0c0c8c">3.615,65</div><svg style="position:absolute;left:40px;top:417px" width="20" height="20" viewBox="0 0 20 20" shape-rendering="crispEdges"><rect x="3" y="5" width="15" height="11" fill="#303050"/><rect x="2" y="4" width="15" height="11" fill="#000060"/><rect x="3" y="5" width="13" height="2" fill="#1838ff"/><rect x="3" y="8" width="13" height="6" fill="#fbe68a"/><path d="M9,8 H10 V10 L12,11 L13,12 L11,12 V14 H10 L9,12 L7,11 L7.5,10 Z" fill="#000060" shape-rendering="auto"/></svg><div class="t" style="left:65px;top:418px;height:19px;line-height:19px;text-align:left;font-size:12.25px;color:#0c0c8c">CAV035b</div><div class="t" style="left:143px;top:418px;height:19px;line-height:19px;text-align:left;font-size:11.5px;font-weight:bold;color:#0c0c8c">CAV</div><svg style="position:absolute;left:182px;top:417px" width="20" height="20" viewBox="0 0 20 20" shape-rendering="crispEdges"><g shape-rendering="auto"><path d="M4,3 H13 L14,4 L15,5 V13 H18 V14.5 L17,15.5 L16,16.5 H7 L6,15.5 L5,14.5 V8 H2 V5 L3,4 H4 Z" fill="#000"/><path d="M5,4 H13 L14,5 V13 H9 V15 H7 L6,14 V4 Z" fill="#1010ff"/><circle cx="10.6" cy="8.6" r="4.3" fill="#ffff20"/><path d="M8.2,6 H9.2 V11 H8.2 Z M9,5 H12 V6 H9 Z M7,7.2 H11 V8 H7 Z M7,9.2 H11 V10 H7 Z M9,11 H12 V12 H9 Z" fill="#ff0000"/><path d="M3,5 H5 V7 H3 Z" fill="#c0c0c0"/><path d="M9.5,13.5 H17 L16,15.5 H9 Z" fill="#b8b040"/><path d="M9,15 H16 V15.6 H9 Z" fill="#d8d8d8"/></g></svg><svg style="position:absolute;left:204px;top:417px" width="20" height="20" viewBox="0 0 20 20" shape-rendering="crispEdges"><g shape-rendering="auto"><path d="M11,2 H13 L14.5,8 L15,11.5 L17.5,12.5 L18,14 L15,16 L12.5,15 L10.5,8 Z" fill="#ff6010"/><path d="M11,2 H13 L13.3,3.5 H10.8 Z" fill="#902000"/><path d="M10.6,4.2 H13.5 L13.7,5 H10.5 Z M10.3,7 H14 L14.3,8 H10.2 Z M11.5,10 H14.8 L15,12 H12 Z" fill="#fff"/><path d="M10.2,3 L9.8,8 M14.5,4 L15.2,10" stroke="#9aa8b8" stroke-width="0.6" fill="none"/><path d="M3,13 C3,9 5,7.5 8,7.5 C10.5,7.5 12.5,9.5 13,12.5 L14,15.5 L12,17.5 L8,17 L4,15.5 Z" fill="#f0f000" stroke="#6a6a00" stroke-width="0.7"/><path d="M5,9.5 L8,9 M9,10 L10,13 M11,14 L11,16 M4.5,12.5 L6,12" stroke="#8a8a00" stroke-width="0.9"/></g></svg><svg style="position:absolute;left:229px;top:417px" width="20" height="20" viewBox="0 0 20 20" shape-rendering="crispEdges"><g fill="#0a8a0a" shape-rendering="auto"><path d="M7.07,1.94 L12.8,1.94 L13.2,2.9 L14.9,2.9 L15.3,1.94 L16,1.94 L16,6.8 L11.05,6.8 L11.05,6.2 L11.8,5.6 L11.8,4.65 L11.05,3.88 L9.1,3.88 L8.5,4.65 L7.75,5.8 L6.8,6.8 L5.2,6.8 L3.9,5.4 L5.04,4.07 L6,3.1 Z"/><path d="M1.94,7.95 L6.98,7.95 L6.98,12.6 L5.8,12.6 L5.4,12 L4.85,12 L4.85,13.95 L8.9,13.95 L8.9,16.86 L4.26,16.86 L3.1,15.5 L1.94,14.7 L1.94,11.2 L2.9,11.05 L2.9,9.1 L1.94,8.7 Z"/><path d="M15.5,7.95 L16.86,9.7 L17.8,10.3 L17.8,14.7 L16.7,15.5 L15.7,16.86 L12.8,16.86 L12.4,18 L10.1,15.5 L10.85,14.34 L12.4,13 L13.2,13.95 L14.9,13.95 L14.9,11.6 L13.95,10.85 L13,10.5 L14.15,8.9 Z"/></g></svg><div class="t" style="left:258px;top:418px;height:19px;line-height:19px;text-align:left;font-size:12.25px;color:#0c0c8c">m³</div><div class="t" style="left:289px;top:418px;height:19px;line-height:19px;text-align:left;font-size:12.25px;color:#0c0c8c">Viga de equilíbrio de betão armado, realizada com betão C25/30 (X0(P); D25; S3; Cl 0,4) fabricado em central, e aço A400 NR, quantidade 100 kg/m³.</div><div style="left:1664px;top:418px;width:63px;height:16px;background:linear-gradient(#eef8ee,#cdeccd)"></div><svg style="position:absolute;left:1665px;top:429px" width="4" height="4" viewBox="0 0 4 4" shape-rendering="crispEdges"><path d="M0 0L4 4H0z" fill="#8a0000"/></svg><svg style="position:absolute;left:1722px;top:429px" width="4" height="4" viewBox="0 0 4 4" shape-rendering="crispEdges"><path d="M4 0V4H0z" fill="#008000"/></svg><div class="t" style="left:1663px;top:418px;height:19px;line-height:19px;width:60px;text-align:right;font-size:12.25px;color:#0c0c8c">6,520</div><div class="t" style="left:1726px;top:418px;height:19px;line-height:19px;width:81px;text-align:right;font-size:12.25px;color:#0c0c8c">224,70</div><div class="t" style="left:1811px;top:418px;height:19px;line-height:19px;width:78px;text-align:right;font-size:12.25px;color:#0c0c8c">1.465,04</div><svg style="position:absolute;left:40px;top:435px" width="20" height="20" viewBox="0 0 20 20" shape-rendering="crispEdges"><rect x="3" y="5" width="15" height="11" fill="#505050"/><rect x="2" y="4" width="15" height="11" fill="#000"/><rect x="3" y="5" width="13" height="2" fill="#1030ff"/><rect x="3" y="8" width="13" height="6" fill="#fff"/><path d="M8.5,8 H11 V10 H12.5 L9.75,13.5 L7,10 H8.5 Z" fill="#ff0000" shape-rendering="auto"/></svg><svg style="position:absolute;left:32px;top:453px" width="20" height="20" viewBox="0 0 20 20" shape-rendering="crispEdges"><path d="M5,4 H10 L11,6 H16 L17,8 V14 L16,15.5 H4 L2,14 V7 L3,5.5 Z" fill="#000" shape-rendering="auto"/><path d="M5.5,5 H9.6 L10.5,7 H15.5 L16,8 V13.5 L15.5,14.5 H4.5 L3,13.5 V7.5 L4,6 Z" fill="#fff" shape-rendering="auto"/><path d="M8.5,8 H11 V10 H12.5 L9.75,13.5 L7,10 H8.5 Z" fill="#ff0000" shape-rendering="auto"/></svg><svg style="position:absolute;left:24px;top:471px" width="20" height="20" viewBox="0 0 20 20" shape-rendering="crispEdges"><g shape-rendering="auto"><path d="M5,4 H10 L11,6 H16 L17,8 V14 L16,15.5 H4 L2,14 V7 L3,5.5 Z" fill="#b07a08"/><path d="M5.5,5 H9.6 L10.5,7 H15.5 L16,8 V13.5 L15.5,14.5 H4.5 L3,13.5 V7.5 L4,6 Z" fill="#f8e08a"/><path d="M4,8 H15.5 V13.5 H4 Z" fill="#f5da78"/><path d="M3,14 H16.5 V15.3 H3 Z" fill="#c08a10"/></g><rect x="8" y="10" width="5" height="1.5" fill="#4a3000"/></svg><div class="t" style="left:49px;top:472px;height:19px;line-height:19px;text-align:left;font-size:12.25px;color:#000">E</div><svg style="position:absolute;left:166px;top:471px" width="20" height="20" viewBox="0 0 20 20" shape-rendering="crispEdges"><g shape-rendering="auto"><path d="M4,3 H13 L14,4 L15,5 V12 H18 V14 L17,15 L16,16 H7 L6,15 L5,14 V8 H2 V5 L3,4 H4 Z" fill="#004a10"/><path d="M5,4 H13 L14,5 V12 H9 V14 H7 L6,13 V4 Z" fill="#58f088"/><path d="M3,5 H5 V7 H3 Z" fill="#60e070"/><path d="M10,13 H17 L16,14 L15,15 H9 Z" fill="#70d060"/><path d="M7,6 H13 V7 H7 Z M7,8 H13 V9 H7 Z M7,10 H13 V11 H7 Z" fill="#003a00"/></g></svg><svg style="position:absolute;left:213px;top:471px" width="20" height="20" viewBox="0 0 20 20" shape-rendering="crispEdges"><g fill="#0a8a0a" shape-rendering="auto"><path d="M7.07,1.94 L12.8,1.94 L13.2,2.9 L14.9,2.9 L15.3,1.94 L16,1.94 L16,6.8 L11.05,6.8 L11.05,6.2 L11.8,5.6 L11.8,4.65 L11.05,3.88 L9.1,3.88 L8.5,4.65 L7.75,5.8 L6.8,6.8 L5.2,6.8 L3.9,5.4 L5.04,4.07 L6,3.1 Z"/><path d="M1.94,7.95 L6.98,7.95 L6.98,12.6 L5.8,12.6 L5.4,12 L4.85,12 L4.85,13.95 L8.9,13.95 L8.9,16.86 L4.26,16.86 L3.1,15.5 L1.94,14.7 L1.94,11.2 L2.9,11.05 L2.9,9.1 L1.94,8.7 Z"/><path d="M15.5,7.95 L16.86,9.7 L17.8,10.3 L17.8,14.7 L16.7,15.5 L15.7,16.86 L12.8,16.86 L12.4,18 L10.1,15.5 L10.85,14.34 L12.4,13 L13.2,13.95 L14.9,13.95 L14.9,11.6 L13.95,10.85 L13,10.5 L14.15,8.9 Z"/></g></svg><div class="t" style="left:273px;top:472px;height:19px;line-height:19px;text-align:left;font-size:12.25px;color:#000">Estruturas</div><div class="t" style="left:1663px;top:472px;height:19px;line-height:19px;width:60px;text-align:right;font-size:12.25px;color:#000">1,000</div><div class="t" style="left:1726px;top:472px;height:19px;line-height:19px;width:81px;text-align:right;font-size:12.25px;color:#000">245.856,72</div><div class="t" style="left:1811px;top:472px;height:19px;line-height:19px;width:78px;text-align:right;font-size:12.25px;color:#000">245.856,72</div><svg style="position:absolute;left:32px;top:489px" width="20" height="20" viewBox="0 0 20 20" shape-rendering="crispEdges"><g shape-rendering="auto"><path d="M5,4 H10 L11,6 H16 L17,8 V14 L16,15.5 H4 L2,14 V7 L3,5.5 Z" fill="#b07a08"/><path d="M5.5,5 H9.6 L10.5,7 H15.5 L16,8 V13.5 L15.5,14.5 H4.5 L3,13.5 V7.5 L4,6 Z" fill="#f8e08a"/><path d="M4,8 H15.5 V13.5 H4 Z" fill="#f5da78"/><path d="M3,14 H16.5 V15.3 H3 Z" fill="#c08a10"/></g><rect x="8" y="10" width="5" height="1.5" fill="#4a3000"/></svg><div class="t" style="left:57px;top:490px;height:19px;line-height:19px;text-align:left;font-size:12.25px;color:#000">EA</div><svg style="position:absolute;left:174px;top:489px" width="20" height="20" viewBox="0 0 20 20" shape-rendering="crispEdges"><g shape-rendering="auto"><path d="M4,3 H13 L14,4 L15,5 V12 H18 V14 L17,15 L16,16 H7 L6,15 L5,14 V8 H2 V5 L3,4 H4 Z" fill="#004a10"/><path d="M5,4 H13 L14,5 V12 H9 V14 H7 L6,13 V4 Z" fill="#58f088"/><path d="M3,5 H5 V7 H3 Z" fill="#60e070"/><path d="M10,13 H17 L16,14 L15,15 H9 Z" fill="#70d060"/><path d="M7,6 H13 V7 H7 Z M7,8 H13 V9 H7 Z M7,10 H13 V11 H7 Z" fill="#003a00"/></g></svg><svg style="position:absolute;left:221px;top:489px" width="20" height="20" viewBox="0 0 20 20" shape-rendering="crispEdges"><g fill="#0a8a0a" shape-rendering="auto"><path d="M7.07,1.94 L12.8,1.94 L13.2,2.9 L14.9,2.9 L15.3,1.94 L16,1.94 L16,6.8 L11.05,6.8 L11.05,6.2 L11.8,5.6 L11.8,4.65 L11.05,3.88 L9.1,3.88 L8.5,4.65 L7.75,5.8 L6.8,6.8 L5.2,6.8 L3.9,5.4 L5.04,4.07 L6,3.1 Z"/><path d="M1.94,7.95 L6.98,7.95 L6.98,12.6 L5.8,12.6 L5.4,12 L4.85,12 L4.85,13.95 L8.9,13.95 L8.9,16.86 L4.26,16.86 L3.1,15.5 L1.94,14.7 L1.94,11.2 L2.9,11.05 L2.9,9.1 L1.94,8.7 Z"/><path d="M15.5,7.95 L16.86,9.7 L17.8,10.3 L17.8,14.7 L16.7,15.5 L15.7,16.86 L12.8,16.86 L12.4,18 L10.1,15.5 L10.85,14.34 L12.4,13 L13.2,13.95 L14.9,13.95 L14.9,11.6 L13.95,10.85 L13,10.5 L14.15,8.9 Z"/></g></svg><div class="t" style="left:281px;top:490px;height:19px;line-height:19px;text-align:left;font-size:12.25px;color:#000">Metálicas</div><div class="t" style="left:1663px;top:490px;height:19px;line-height:19px;width:60px;text-align:right;font-size:12.25px;color:#000">1,000</div><div class="t" style="left:1726px;top:490px;height:19px;line-height:19px;width:81px;text-align:right;font-size:12.25px;color:#000">2.014,34</div><div class="t" style="left:1811px;top:490px;height:19px;line-height:19px;width:78px;text-align:right;font-size:12.25px;color:#000">2.014,34</div><svg style="position:absolute;left:40px;top:507px" width="20" height="20" viewBox="0 0 20 20" shape-rendering="crispEdges"><rect x="3" y="5" width="15" height="11" fill="#303050"/><rect x="2" y="4" width="15" height="11" fill="#000060"/><rect x="3" y="5" width="13" height="2" fill="#1838ff"/><rect x="3" y="8" width="13" height="6" fill="#fbe68a"/><path d="M9,8 H10 V10 L12,11 L13,12 L11,12 V14 H10 L9,12 L7,11 L7.5,10 Z" fill="#000060" shape-rendering="auto"/></svg><div class="t" style="left:65px;top:508px;height:19px;line-height:19px;text-align:left;font-size:12.25px;color:#0c0c8c">EAM045</div><div class="t" style="left:143px;top:508px;height:19px;line-height:19px;text-align:left;font-size:11.5px;font-weight:bold;color:#0c0c8c">EAM</div><svg style="position:absolute;left:182px;top:507px" width="20" height="20" viewBox="0 0 20 20" shape-rendering="crispEdges"><g shape-rendering="auto"><path d="M4,3 H13 L14,4 L15,5 V13 H18 V14.5 L17,15.5 L16,16.5 H7 L6,15.5 L5,14.5 V8 H2 V5 L3,4 H4 Z" fill="#000"/><path d="M5,4 H13 L14,5 V13 H9 V15 H7 L6,14 V4 Z" fill="#1010ff"/><circle cx="10.6" cy="8.6" r="4.3" fill="#ffff20"/><path d="M8.2,6 H9.2 V11 H8.2 Z M9,5 H12 V6 H9 Z M7,7.2 H11 V8 H7 Z M7,9.2 H11 V10 H7 Z M9,11 H12 V12 H9 Z" fill="#ff0000"/><path d="M3,5 H5 V7 H3 Z" fill="#c0c0c0"/><path d="M9.5,13.5 H17 L16,15.5 H9 Z" fill="#b8b040"/><path d="M9,15 H16 V15.6 H9 Z" fill="#d8d8d8"/></g></svg><svg style="position:absolute;left:204px;top:507px" width="20" height="20" viewBox="0 0 20 20" shape-rendering="crispEdges"><g shape-rendering="auto"><path d="M11,2 H13 L14.5,8 L15,11.5 L17.5,12.5 L18,14 L15,16 L12.5,15 L10.5,8 Z" fill="#ff6010"/><path d="M11,2 H13 L13.3,3.5 H10.8 Z" fill="#902000"/><path d="M10.6,4.2 H13.5 L13.7,5 H10.5 Z M10.3,7 H14 L14.3,8 H10.2 Z M11.5,10 H14.8 L15,12 H12 Z" fill="#fff"/><path d="M10.2,3 L9.8,8 M14.5,4 L15.2,10" stroke="#9aa8b8" stroke-width="0.6" fill="none"/><path d="M3,13 C3,9 5,7.5 8,7.5 C10.5,7.5 12.5,9.5 13,12.5 L14,15.5 L12,17.5 L8,17 L4,15.5 Z" fill="#f0f000" stroke="#6a6a00" stroke-width="0.7"/><path d="M5,9.5 L8,9 M9,10 L10,13 M11,14 L11,16 M4.5,12.5 L6,12" stroke="#8a8a00" stroke-width="0.9"/></g></svg><svg style="position:absolute;left:229px;top:507px" width="20" height="20" viewBox="0 0 20 20" shape-rendering="crispEdges"><g fill="#0a8a0a" shape-rendering="auto"><path d="M7.07,1.94 L12.8,1.94 L13.2,2.9 L14.9,2.9 L15.3,1.94 L16,1.94 L16,6.8 L11.05,6.8 L11.05,6.2 L11.8,5.6 L11.8,4.65 L11.05,3.88 L9.1,3.88 L8.5,4.65 L7.75,5.8 L6.8,6.8 L5.2,6.8 L3.9,5.4 L5.04,4.07 L6,3.1 Z"/><path d="M1.94,7.95 L6.98,7.95 L6.98,12.6 L5.8,12.6 L5.4,12 L4.85,12 L4.85,13.95 L8.9,13.95 L8.9,16.86 L4.26,16.86 L3.1,15.5 L1.94,14.7 L1.94,11.2 L2.9,11.05 L2.9,9.1 L1.94,8.7 Z"/><path d="M15.5,7.95 L16.86,9.7 L17.8,10.3 L17.8,14.7 L16.7,15.5 L15.7,16.86 L12.8,16.86 L12.4,18 L10.1,15.5 L10.85,14.34 L12.4,13 L13.2,13.95 L14.9,13.95 L14.9,11.6 L13.95,10.85 L13,10.5 L14.15,8.9 Z"/></g></svg><div class="t" style="left:258px;top:508px;height:19px;line-height:19px;text-align:left;font-size:12.25px;color:#0c0c8c">kg</div><div class="t" style="left:289px;top:508px;height:19px;line-height:19px;text-align:left;font-size:12.25px;color:#0c0c8c">Aço S235JR (Fe360) em estrutura metálica, com peças simples de perfis laminados a quente, com uniões soldadas.</div><div style="left:1664px;top:508px;width:63px;height:16px;background:linear-gradient(#eef8ee,#cdeccd)"></div><svg style="position:absolute;left:1665px;top:519px" width="4" height="4" viewBox="0 0 4 4" shape-rendering="crispEdges"><path d="M0 0L4 4H0z" fill="#8a0000"/></svg><div class="t" style="left:1663px;top:508px;height:19px;line-height:19px;width:60px;text-align:right;font-size:12.25px;color:#0c0c8c">1.125,330</div><div class="t" style="left:1726px;top:508px;height:19px;line-height:19px;width:81px;text-align:right;font-size:12.25px;color:#0c0c8c">1,79</div><div class="t" style="left:1811px;top:508px;height:19px;line-height:19px;width:78px;text-align:right;font-size:12.25px;color:#0c0c8c">2.014,34</div><svg style="position:absolute;left:40px;top:525px" width="20" height="20" viewBox="0 0 20 20" shape-rendering="crispEdges"><rect x="3" y="5" width="15" height="11" fill="#505050"/><rect x="2" y="4" width="15" height="11" fill="#000"/><rect x="3" y="5" width="13" height="2" fill="#1030ff"/><rect x="3" y="8" width="13" height="6" fill="#fff"/><path d="M8.5,8 H11 V10 H12.5 L9.75,13.5 L7,10 H8.5 Z" fill="#ff0000" shape-rendering="auto"/></svg><svg style="position:absolute;left:32px;top:543px" width="20" height="20" viewBox="0 0 20 20" shape-rendering="crispEdges"><g shape-rendering="auto"><path d="M5,4 H10 L11,6 H16 L17,8 V14 L16,15.5 H4 L2,14 V7 L3,5.5 Z" fill="#b07a08"/><path d="M5.5,5 H9.6 L10.5,7 H15.5 L16,8 V13.5 L15.5,14.5 H4.5 L3,13.5 V7.5 L4,6 Z" fill="#f8e08a"/><path d="M4,8 H15.5 V13.5 H4 Z" fill="#f5da78"/><path d="M3,14 H16.5 V15.3 H3 Z" fill="#c08a10"/></g><rect x="8" y="10" width="5" height="1.5" fill="#4a3000"/></svg><div class="t" style="left:57px;top:544px;height:19px;line-height:19px;text-align:left;font-size:12.25px;color:#000">EH</div><svg style="position:absolute;left:174px;top:543px" width="20" height="20" viewBox="0 0 20 20" shape-rendering="crispEdges"><g shape-rendering="auto"><path d="M4,3 H13 L14,4 L15,5 V12 H18 V14 L17,15 L16,16 H7 L6,15 L5,14 V8 H2 V5 L3,4 H4 Z" fill="#004a10"/><path d="M5,4 H13 L14,5 V12 H9 V14 H7 L6,13 V4 Z" fill="#58f088"/><path d="M3,5 H5 V7 H3 Z" fill="#60e070"/><path d="M10,13 H17 L16,14 L15,15 H9 Z" fill="#70d060"/><path d="M7,6 H13 V7 H7 Z M7,8 H13 V9 H7 Z M7,10 H13 V11 H7 Z" fill="#003a00"/></g></svg><svg style="position:absolute;left:221px;top:543px" width="20" height="20" viewBox="0 0 20 20" shape-rendering="crispEdges"><g fill="#0a8a0a" shape-rendering="auto"><path d="M7.07,1.94 L12.8,1.94 L13.2,2.9 L14.9,2.9 L15.3,1.94 L16,1.94 L16,6.8 L11.05,6.8 L11.05,6.2 L11.8,5.6 L11.8,4.65 L11.05,3.88 L9.1,3.88 L8.5,4.65 L7.75,5.8 L6.8,6.8 L5.2,6.8 L3.9,5.4 L5.04,4.07 L6,3.1 Z"/><path d="M1.94,7.95 L6.98,7.95 L6.98,12.6 L5.8,12.6 L5.4,12 L4.85,12 L4.85,13.95 L8.9,13.95 L8.9,16.86 L4.26,16.86 L3.1,15.5 L1.94,14.7 L1.94,11.2 L2.9,11.05 L2.9,9.1 L1.94,8.7 Z"/><path d="M15.5,7.95 L16.86,9.7 L17.8,10.3 L17.8,14.7 L16.7,15.5 L15.7,16.86 L12.8,16.86 L12.4,18 L10.1,15.5 L10.85,14.34 L12.4,13 L13.2,13.95 L14.9,13.95 L14.9,11.6 L13.95,10.85 L13,10.5 L14.15,8.9 Z"/></g></svg><div class="t" style="left:281px;top:544px;height:19px;line-height:19px;text-align:left;font-size:12.25px;color:#000">Betão armado</div><div class="t" style="left:1663px;top:544px;height:19px;line-height:19px;width:60px;text-align:right;font-size:12.25px;color:#000">1,000</div><div class="t" style="left:1726px;top:544px;height:19px;line-height:19px;width:81px;text-align:right;font-size:12.25px;color:#000">243.842,38</div><div class="t" style="left:1811px;top:544px;height:19px;line-height:19px;width:78px;text-align:right;font-size:12.25px;color:#000">243.842,38</div><div style="left:15px;top:166px;width:1px;height:395px;background:#000"></div><div style="left:15px;top:175px;width:4px;height:1px;background:#000"></div><div style="left:15px;top:193px;width:4px;height:1px;background:#000"></div><div style="left:23px;top:211px;width:4px;height:1px;background:#000"></div><div style="left:31px;top:229px;width:4px;height:1px;background:#000"></div><div style="left:31px;top:247px;width:4px;height:1px;background:#000"></div><div style="left:23px;top:265px;width:4px;height:1px;background:#000"></div><div style="left:31px;top:283px;width:4px;height:1px;background:#000"></div><div style="left:31px;top:301px;width:4px;height:1px;background:#000"></div><div style="left:23px;top:319px;width:4px;height:1px;background:#000"></div><div style="left:31px;top:337px;width:4px;height:1px;background:#000"></div><div style="left:31px;top:355px;width:4px;height:1px;background:#000"></div><div style="left:31px;top:373px;width:4px;height:1px;background:#000"></div><div style="left:23px;top:391px;width:4px;height:1px;background:#000"></div><div style="left:31px;top:409px;width:4px;height:1px;background:#000"></div><div style="left:31px;top:427px;width:4px;height:1px;background:#000"></div><div style="left:31px;top:445px;width:4px;height:1px;background:#000"></div><div style="left:23px;top:463px;width:4px;height:1px;background:#000"></div><div style="left:15px;top:481px;width:4px;height:1px;background:#000"></div><div style="left:23px;top:499px;width:4px;height:1px;background:#000"></div><div style="left:31px;top:517px;width:4px;height:1px;background:#000"></div><div style="left:31px;top:535px;width:4px;height:1px;background:#000"></div><div style="left:23px;top:553px;width:4px;height:1px;background:#000"></div><div style="left:23px;top:202px;width:1px;height:262px;background:#000"></div><div style="left:23px;top:490px;width:1px;height:71px;background:#000"></div><div style="left:31px;top:220px;width:1px;height:28px;background:#000"></div><div style="left:31px;top:274px;width:1px;height:28px;background:#000"></div><div style="left:31px;top:328px;width:1px;height:46px;background:#000"></div><div style="left:31px;top:400px;width:1px;height:46px;background:#000"></div><div style="left:31px;top:508px;width:1px;height:28px;background:#000"></div><div style="left:34px;top:327px;width:1859px;height:19px;border:1px solid #808080;border-right:none"></div><div style="left:223px;top:326px;width:31px;height:21px;border:1px solid #909090;box-shadow:inset 0 0 0 1px #fff, inset 0 0 0 2px #909090"></div><div style="left:6px;top:561px;width:1908px;height:9px;background:#f0f0f0"></div><div style="left:6px;top:563px;width:1908px;height:1px;background:#404040"></div><div style="left:6px;top:566px;width:1908px;height:2px;background:#202020"></div><div style="left:9px;top:570px;width:1901px;height:428px;background:#f0f0f0;border:1px solid #6a6a6a"></div><div style="left:10px;top:571px;width:1899px;height:268px;background:#fff"></div><div style="left:10px;top:571px;width:1899px;height:33px;background:linear-gradient(#f4f3ef,#e9e7e1 60%,#dcd9d0)"></div><div style="left:10px;top:604px;width:1899px;height:2px;background:#000"></div><div style="left:87px;top:572px;width:1px;height:32px;background:#7a7a78"></div><div style="left:88px;top:572px;width:1px;height:32px;background:#fff"></div><div style="left:1428px;top:572px;width:1px;height:32px;background:#7a7a78"></div><div style="left:1429px;top:572px;width:1px;height:32px;background:#fff"></div><div style="left:1548px;top:572px;width:1px;height:32px;background:#7a7a78"></div><div style="left:1549px;top:572px;width:1px;height:32px;background:#fff"></div><div style="left:1668px;top:572px;width:1px;height:32px;background:#7a7a78"></div><div style="left:1669px;top:572px;width:1px;height:32px;background:#fff"></div><div style="left:1788px;top:572px;width:1px;height:32px;background:#7a7a78"></div><div style="left:1789px;top:572px;width:1px;height:32px;background:#fff"></div><div class="t" style="left:12px;top:579px;height:19px;line-height:19px;text-align:left;font-size:12.4px">Código</div><div class="t" style="left:90px;top:579px;height:19px;line-height:19px;text-align:left;font-size:12.4px">Tipo</div><div class="t" style="left:1370px;top:571px;height:19px;line-height:19px;width:55px;text-align:right;font-size:12.4px">Peso</div><div class="t" style="left:1370px;top:586px;height:19px;line-height:19px;width:55px;text-align:right;font-size:12.4px">(kg/m³)</div><div class="t" style="left:1428px;top:571px;height:19px;line-height:19px;width:117px;text-align:right;font-size:12.4px">Densidade aparente</div><div class="t" style="left:1428px;top:586px;height:19px;line-height:19px;width:117px;text-align:right;font-size:12.4px">(kg/l)</div><div class="t" style="left:1548px;top:571px;height:19px;line-height:19px;width:117px;text-align:right;font-size:12.4px">Volume</div><div class="t" style="left:1548px;top:586px;height:19px;line-height:19px;width:117px;text-align:right;font-size:12.4px">(l/m³)</div><div class="t" style="left:1668px;top:571px;height:19px;line-height:19px;width:117px;text-align:right;font-size:12.4px">Peso total</div><div class="t" style="left:1668px;top:586px;height:19px;line-height:19px;width:117px;text-align:right;font-size:12.4px">(kg)</div><div class="t" style="left:1788px;top:571px;height:19px;line-height:19px;width:118px;text-align:right;font-size:12.4px">Volume total</div><div class="t" style="left:1788px;top:586px;height:19px;line-height:19px;width:118px;text-align:right;font-size:12.4px">(l)</div><div style="left:10px;top:606px;width:1899px;height:17px;background:linear-gradient(#bcc6ea,#8e9fd4)"></div><div style="left:87px;top:606px;width:1px;height:17px;background:#fff;opacity:.8"></div><div style="left:1428px;top:606px;width:1px;height:17px;background:#fff;opacity:.8"></div><div style="left:1548px;top:606px;width:1px;height:17px;background:#fff;opacity:.8"></div><div style="left:1668px;top:606px;width:1px;height:17px;background:#fff;opacity:.8"></div><div style="left:1788px;top:606px;width:1px;height:17px;background:#fff;opacity:.8"></div><div class="t" style="left:91px;top:606px;height:19px;line-height:19px;text-align:left;font-size:12.4px;color:#000">Resíduos gerados</div><div style="left:87px;top:623px;width:1px;height:18px;background:#ececec"></div><div style="left:1428px;top:623px;width:1px;height:18px;background:#ececec"></div><div style="left:1548px;top:623px;width:1px;height:18px;background:#ececec"></div><div style="left:1668px;top:623px;width:1px;height:18px;background:#ececec"></div><div style="left:1788px;top:623px;width:1px;height:18px;background:#ececec"></div><div class="t" style="left:10px;top:624px;height:19px;line-height:19px;width:62px;text-align:right;font-size:12.4px;color:#7a7a7a">17 04 05</div><div class="t" style="left:91px;top:624px;height:19px;line-height:19px;text-align:left;font-size:12.4px;color:#7a7a7a">Ferro e aço.</div><div class="t" style="left:1370px;top:624px;height:19px;line-height:19px;width:54px;text-align:right;font-size:12.4px;color:#7a7a7a">2,653</div><div class="t" style="left:1428px;top:624px;height:19px;line-height:19px;width:116px;text-align:right;font-size:12.4px;color:#7a7a7a">2,100</div><div class="t" style="left:1548px;top:624px;height:19px;line-height:19px;width:116px;text-align:right;font-size:12.4px;color:#7a7a7a">1,263</div><div class="t" style="left:1668px;top:624px;height:19px;line-height:19px;width:116px;text-align:right;font-size:12.4px;color:#7a7a7a">196,635</div><div class="t" style="left:1788px;top:624px;height:19px;line-height:19px;width:117px;text-align:right;font-size:12.4px;color:#7a7a7a">93,611</div><div style="left:87px;top:641px;width:1px;height:18px;background:#ececec"></div><div style="left:1428px;top:641px;width:1px;height:18px;background:#ececec"></div><div style="left:1548px;top:641px;width:1px;height:18px;background:#ececec"></div><div style="left:1668px;top:641px;width:1px;height:18px;background:#ececec"></div><div style="left:1788px;top:641px;width:1px;height:18px;background:#ececec"></div><div class="t" style="left:10px;top:642px;height:19px;line-height:19px;width:62px;text-align:right;font-size:12.4px;color:#7a7a7a">17 01 01</div><div class="t" style="left:91px;top:642px;height:19px;line-height:19px;text-align:left;font-size:12.4px;color:#7a7a7a">Betão (betões, argamassas e pré-fabricados).</div><div class="t" style="left:1370px;top:642px;height:19px;line-height:19px;width:54px;text-align:right;font-size:12.4px;color:#7a7a7a">7,922</div><div class="t" style="left:1428px;top:642px;height:19px;line-height:19px;width:116px;text-align:right;font-size:12.4px;color:#7a7a7a">1,500</div><div class="t" style="left:1548px;top:642px;height:19px;line-height:19px;width:116px;text-align:right;font-size:12.4px;color:#7a7a7a">5,281</div><div class="t" style="left:1668px;top:642px;height:19px;line-height:19px;width:116px;text-align:right;font-size:12.4px;color:#7a7a7a">587,163</div><div class="t" style="left:1788px;top:642px;height:19px;line-height:19px;width:117px;text-align:right;font-size:12.4px;color:#7a7a7a">391,417</div><div style="left:10px;top:659px;width:1899px;height:1px;background:#8a8a8a"></div><div style="left:10px;top:677px;width:1899px;height:1px;background:#8a8a8a"></div><div style="left:87px;top:660px;width:1px;height:17px;background:#ececec"></div><div style="left:1428px;top:660px;width:1px;height:17px;background:#ececec"></div><div style="left:1548px;top:660px;width:1px;height:17px;background:#ececec"></div><div style="left:1668px;top:660px;width:1px;height:17px;background:#ececec"></div><div style="left:1788px;top:660px;width:1px;height:17px;background:#ececec"></div><div style="left:10px;top:677px;width:1899px;height:18px;background:linear-gradient(#fbfbe6,#efefc2)"></div><div style="left:87px;top:677px;width:1px;height:18px;background:#fff;opacity:.7"></div><div style="left:1428px;top:677px;width:1px;height:18px;background:#fff;opacity:.7"></div><div style="left:1548px;top:677px;width:1px;height:18px;background:#fff;opacity:.7"></div><div style="left:1668px;top:677px;width:1px;height:18px;background:#fff;opacity:.7"></div><div style="left:1788px;top:677px;width:1px;height:18px;background:#fff;opacity:.7"></div><div class="t" style="left:91px;top:678px;height:19px;line-height:19px;text-align:left;font-size:12.4px;color:#000">Subtotal</div><div class="t" style="left:1370px;top:678px;height:19px;line-height:19px;width:54px;text-align:right;font-size:12.4px;color:#000">10,575</div><div class="t" style="left:1428px;top:678px;height:19px;line-height:19px;width:116px;text-align:right;font-size:12.4px;color:#000">1,616</div><div class="t" style="left:1548px;top:678px;height:19px;line-height:19px;width:116px;text-align:right;font-size:12.4px;color:#000">6,544</div><div class="t" style="left:1668px;top:678px;height:19px;line-height:19px;width:116px;text-align:right;font-size:12.4px;color:#000">783,798</div><div class="t" style="left:1788px;top:678px;height:19px;line-height:19px;width:117px;text-align:right;font-size:12.4px;color:#000">485,028</div><div style="left:88px;top:677px;width:1821px;height:1px;background:#808080"></div><div style="left:9px;top:658px;width:80px;height:21px;border:1px solid #707070"></div><div style="left:10px;top:660px;width:77px;height:17px;border:1px solid #707070"></div><svg style="position:absolute;left:19px;top:663px" width="16" height="11" viewBox="0 0 16 11" shape-rendering="crispEdges"><rect x="1" y="1" width="14" height="9" fill="#666"/><rect x="0.5" y="0.5" width="13" height="9" fill="#fff" stroke="#000"/><path d="M5.5 1H8.5V3.5H10.5L7 7.5L3.5 3.5H5.5Z" fill="#f00"/></svg><div style="left:10px;top:696px;width:1899px;height:17px;background:linear-gradient(#bcc6ea,#8e9fd4)"></div><div style="left:87px;top:696px;width:1px;height:17px;background:#fff;opacity:.8"></div><div style="left:1428px;top:696px;width:1px;height:17px;background:#fff;opacity:.8"></div><div style="left:1548px;top:696px;width:1px;height:17px;background:#fff;opacity:.8"></div><div style="left:1668px;top:696px;width:1px;height:17px;background:#fff;opacity:.8"></div><div style="left:1788px;top:696px;width:1px;height:17px;background:#fff;opacity:.8"></div><div class="t" style="left:91px;top:696px;height:19px;line-height:19px;text-align:left;font-size:12.4px;color:#000">Embalagens</div><div style="left:87px;top:713px;width:1px;height:18px;background:#ececec"></div><div style="left:1428px;top:713px;width:1px;height:18px;background:#ececec"></div><div style="left:1548px;top:713px;width:1px;height:18px;background:#ececec"></div><div style="left:1668px;top:713px;width:1px;height:18px;background:#ececec"></div><div style="left:1788px;top:713px;width:1px;height:18px;background:#ececec"></div><div class="t" style="left:10px;top:714px;height:19px;line-height:19px;width:62px;text-align:right;font-size:12.4px;color:#7a7a7a">15 01 01</div><div class="t" style="left:91px;top:714px;height:19px;line-height:19px;text-align:left;font-size:12.4px;color:#7a7a7a">Embalagens de papel e cartão.</div><div class="t" style="left:1428px;top:714px;height:19px;line-height:19px;width:116px;text-align:right;font-size:12.4px;color:#7a7a7a">0,750</div><div style="left:87px;top:731px;width:1px;height:18px;background:#ececec"></div><div style="left:1428px;top:731px;width:1px;height:18px;background:#ececec"></div><div style="left:1548px;top:731px;width:1px;height:18px;background:#ececec"></div><div style="left:1668px;top:731px;width:1px;height:18px;background:#ececec"></div><div style="left:1788px;top:731px;width:1px;height:18px;background:#ececec"></div><div class="t" style="left:10px;top:732px;height:19px;line-height:19px;width:62px;text-align:right;font-size:12.4px;color:#7a7a7a">15 01 04</div><div class="t" style="left:91px;top:732px;height:19px;line-height:19px;text-align:left;font-size:12.4px;color:#7a7a7a">Embalagens de metal.</div><div class="t" style="left:1428px;top:732px;height:19px;line-height:19px;width:116px;text-align:right;font-size:12.4px;color:#7a7a7a">0,600</div><div style="left:87px;top:749px;width:1px;height:18px;background:#ececec"></div><div style="left:1428px;top:749px;width:1px;height:18px;background:#ececec"></div><div style="left:1548px;top:749px;width:1px;height:18px;background:#ececec"></div><div style="left:1668px;top:749px;width:1px;height:18px;background:#ececec"></div><div style="left:1788px;top:749px;width:1px;height:18px;background:#ececec"></div><div class="t" style="left:10px;top:750px;height:19px;line-height:19px;width:62px;text-align:right;font-size:12.4px;color:#7a7a7a">17 02 01</div><div class="t" style="left:91px;top:750px;height:19px;line-height:19px;text-align:left;font-size:12.4px;color:#7a7a7a">Madeira.</div><div class="t" style="left:1428px;top:750px;height:19px;line-height:19px;width:116px;text-align:right;font-size:12.4px;color:#7a7a7a">1,100</div><div style="left:87px;top:767px;width:1px;height:18px;background:#ececec"></div><div style="left:1428px;top:767px;width:1px;height:18px;background:#ececec"></div><div style="left:1548px;top:767px;width:1px;height:18px;background:#ececec"></div><div style="left:1668px;top:767px;width:1px;height:18px;background:#ececec"></div><div style="left:1788px;top:767px;width:1px;height:18px;background:#ececec"></div><div class="t" style="left:10px;top:768px;height:19px;line-height:19px;width:62px;text-align:right;font-size:12.4px;color:#7a7a7a">17 02 03</div><div class="t" style="left:91px;top:768px;height:19px;line-height:19px;text-align:left;font-size:12.4px;color:#7a7a7a">Plástico.</div><div class="t" style="left:1428px;top:768px;height:19px;line-height:19px;width:116px;text-align:right;font-size:12.4px;color:#7a7a7a">0,600</div><div style="left:87px;top:785px;width:1px;height:18px;background:#ececec"></div><div style="left:1428px;top:785px;width:1px;height:18px;background:#ececec"></div><div style="left:1548px;top:785px;width:1px;height:18px;background:#ececec"></div><div style="left:1668px;top:785px;width:1px;height:18px;background:#ececec"></div><div style="left:1788px;top:785px;width:1px;height:18px;background:#ececec"></div><div class="t" style="left:10px;top:786px;height:19px;line-height:19px;width:62px;text-align:right;font-size:12.4px;color:#7a7a7a">17 06 04</div><div class="t" style="left:91px;top:786px;height:19px;line-height:19px;text-align:left;font-size:12.4px;color:#7a7a7a">Materiais de isolamento não abrangidos em 17 06 01 e 17 06 03.</div><div class="t" style="left:1428px;top:786px;height:19px;line-height:19px;width:116px;text-align:right;font-size:12.4px;color:#7a7a7a">0,600</div><div style="left:10px;top:803px;width:1899px;height:18px;background:linear-gradient(#fbfbe6,#efefc2)"></div><div style="left:87px;top:803px;width:1px;height:18px;background:#fff;opacity:.7"></div><div style="left:1428px;top:803px;width:1px;height:18px;background:#fff;opacity:.7"></div><div style="left:1548px;top:803px;width:1px;height:18px;background:#fff;opacity:.7"></div><div style="left:1668px;top:803px;width:1px;height:18px;background:#fff;opacity:.7"></div><div style="left:1788px;top:803px;width:1px;height:18px;background:#fff;opacity:.7"></div><div class="t" style="left:91px;top:804px;height:19px;line-height:19px;text-align:left;font-size:12.4px;color:#000">Subtotal</div><div style="left:10px;top:821px;width:1899px;height:18px;background:linear-gradient(#fbfbe6,#efefc2)"></div><div style="left:87px;top:821px;width:1px;height:18px;background:#fff;opacity:.7"></div><div style="left:1428px;top:821px;width:1px;height:18px;background:#fff;opacity:.7"></div><div style="left:1548px;top:821px;width:1px;height:18px;background:#fff;opacity:.7"></div><div style="left:1668px;top:821px;width:1px;height:18px;background:#fff;opacity:.7"></div><div style="left:1788px;top:821px;width:1px;height:18px;background:#fff;opacity:.7"></div><div class="t" style="left:91px;top:822px;height:19px;line-height:19px;text-align:left;font-size:12.4px;color:#ff0000">Total</div><div class="t" style="left:1370px;top:822px;height:19px;line-height:19px;width:54px;text-align:right;font-size:12.4px;color:#ff0000">10,575</div><div class="t" style="left:1428px;top:822px;height:19px;line-height:19px;width:116px;text-align:right;font-size:12.4px;color:#ff0000">1,616</div><div class="t" style="left:1548px;top:822px;height:19px;line-height:19px;width:116px;text-align:right;font-size:12.4px;color:#ff0000">6,544</div><div class="t" style="left:1668px;top:822px;height:19px;line-height:19px;width:116px;text-align:right;font-size:12.4px;color:#ff0000">783,798</div><div class="t" style="left:1788px;top:822px;height:19px;line-height:19px;width:117px;text-align:right;font-size:12.4px;color:#ff0000">485,028</div><div style="left:10px;top:839px;width:1899px;height:1px;background:#000"></div><div style="left:1908px;top:604px;width:1px;height:236px;background:#000"></div><svg style="position:absolute;left:0;top:0" width="1920" height="1032" viewBox="0 0 1920 1032"><path d="M72,668 L637,493" stroke="#cc1e2d" stroke-width="3.2" stroke-linecap="round"/><path d="M653.5,488 L634,485.5 L638.5,500.8 Z" fill="#cc1e2d"/></svg><div style="left:657px;top:315px;width:720px;height:588px;background:#efefef;border-radius:8px;box-shadow:0 14px 36px rgba(0,0,0,.30),0 0 8px rgba(0,0,0,.10);border:1px solid #d6d6d6"></div><div style="left:658px;top:316px;width:718px;height:27px;background:#f3f3f3;border-radius:7px 7px 0 0"></div><svg style="position:absolute;left:664px;top:317px" width="16" height="16" viewBox="0 0 16 16" shape-rendering="crispEdges"><rect x="0" y="0" width="16" height="16" fill="#17a050"/><g shape-rendering="auto"><path d="M2.2,5 L5,2 H9.5 L11.5,3 L14,4.3 V13.5 L13,14 H4.5 L2.2,12 Z" fill="#0a3a18"/><path d="M3,5.5 L5.3,3 H9.3 L11,4 V13.2 H4.5 L3,11.7 Z" fill="#c8c8c8"/><path d="M6,3.2 H9.2 L10.5,4 V9 L8,12.5 H6 Z" fill="#f4f4f4"/><rect x="3.5" y="5.5" width="3" height="1.2" fill="#222"/><rect x="3.5" y="7.5" width="3" height="5" fill="#8a8a8a"/><path d="M7.5,13.2 L13.3,5 V13.2 Z" fill="#f2f2f2"/><path d="M7.5,13.2 L13.3,5" stroke="#222" stroke-width="0.9"/><circle cx="11.5" cy="9.5" r="0.7" fill="#222"/><circle cx="10" cy="11.5" r="0.7" fill="#222"/></g></svg><div class="t" style="left:686px;top:317px;height:19px;line-height:19px;text-align:left;font-size:11.85px;color:#8a8a8a">Seleccione um código de resíduo</div><div style="left:1257px;top:325px;width:10px;height:1px;background:#c8c8c8"></div><svg style="position:absolute;left:1302px;top:320px" width="10" height="10" viewBox="0 0 10 10" shape-rendering="crispEdges"><rect x="0.5" y="0.5" width="9" height="9" rx="1" fill="none" stroke="#777"/></svg><svg style="position:absolute;left:1348px;top:320px" width="10" height="10" viewBox="0 0 10 10" shape-rendering="crispEdges"><path d="M0.5 0.5L9.5 9.5M9.5 0.5L0.5 9.5" stroke="#777" stroke-width="1" shape-rendering="auto"/></svg><div style="left:664px;top:349px;width:704px;height:504px;background:#fff;border:1px solid #7a8290"></div><div style="left:1349px;top:350px;width:18px;height:502px;background:#efefef;border-left:1px solid #e4e4e4"></div><div style="left:1357px;top:368px;width:2px;height:141px;background:#6e6e6e"></div><div style="left:665px;top:350px;width:684px;height:502px;overflow:hidden"><div style="left:1px;top:25px;width:682px;height:19px;background:#c2c2c2"></div><div class="t" style="left:7px;top:26px;height:19px;line-height:19px;font-size:12.4px;color:#000">01 04 07 - Resíduos contendo substâncias perigosas, resultantes da transformação física e química de minérios não m...</div><div style="left:1px;top:44px;width:682px;height:1px;background:#eeeeee"></div><div class="t" style="left:7px;top:46px;height:19px;line-height:19px;font-size:12.4px;color:#000">01 04 08 - Gravilhas e fragmentos de rocha não abrangidos 01 04 07.</div><div style="left:1px;top:64px;width:682px;height:1px;background:#eeeeee"></div><div class="t" style="left:7px;top:66px;height:19px;line-height:19px;font-size:12.4px;color:#000">01 04 09 - Areias e argilas.</div><div style="left:1px;top:84px;width:682px;height:1px;background:#eeeeee"></div><div class="t" style="left:7px;top:86px;height:19px;line-height:19px;font-size:12.4px;color:#000">01 04 10 - Poeiras e pós não abrangidos em 01 04 07.</div><div style="left:1px;top:104px;width:682px;height:1px;background:#eeeeee"></div><div class="t" style="left:7px;top:106px;height:19px;line-height:19px;font-size:12.4px;color:#000">01 04 13 - Resíduos do corte e serragem de pedra não abrangidos em 01 04 07.</div><div style="left:1px;top:124px;width:682px;height:1px;background:#eeeeee"></div><div class="t" style="left:7px;top:126px;height:19px;line-height:19px;font-size:12.4px;color:#000">02 01 06 - Fezes, urina e estrume de animais (incluindo palha suja) efluentes recolhidos separadamente e tratados nou...</div><div style="left:1px;top:144px;width:682px;height:1px;background:#eeeeee"></div><div class="t" style="left:7px;top:146px;height:19px;line-height:19px;font-size:12.4px;color:#000">04 02 09 - Resíduos de materiais compósitos (têxteis impregnados, elastómeros, plastómeros).</div><div style="left:1px;top:164px;width:682px;height:1px;background:#eeeeee"></div><div class="t" style="left:7px;top:166px;height:19px;line-height:19px;font-size:12.4px;color:#000">06 01 02 - Ácido clorídrico.</div><div style="left:1px;top:184px;width:682px;height:1px;background:#eeeeee"></div><div class="t" style="left:7px;top:186px;height:19px;line-height:19px;font-size:12.4px;color:#000">06 01 06 - Outros ácidos.</div><div style="left:1px;top:204px;width:682px;height:1px;background:#eeeeee"></div><div class="t" style="left:7px;top:206px;height:19px;line-height:19px;font-size:12.4px;color:#000">06 10 99 - Resíduos sem outras especificações.</div><div style="left:1px;top:224px;width:682px;height:1px;background:#eeeeee"></div><div class="t" style="left:7px;top:226px;height:19px;line-height:19px;font-size:12.4px;color:#000">06 11 99 - Resíduos sem outras especificações.</div><div style="left:1px;top:244px;width:682px;height:1px;background:#eeeeee"></div><div class="t" style="left:7px;top:246px;height:19px;line-height:19px;font-size:12.4px;color:#000">07 07 01 - Líquidos de lavagem e licores mãe aquosos.</div><div style="left:1px;top:264px;width:682px;height:1px;background:#eeeeee"></div><div class="t" style="left:7px;top:266px;height:19px;line-height:19px;font-size:12.4px;color:#000">08 01 11 - Resíduos de tintas e vernizes contendo solventes orgânicos ou outras substâncias perigosas.</div><div style="left:1px;top:284px;width:682px;height:1px;background:#eeeeee"></div><div class="t" style="left:7px;top:286px;height:19px;line-height:19px;font-size:12.4px;color:#000">08 01 21 - Resíduos de produtos de remoção de tintas e vernizes.</div><div style="left:1px;top:304px;width:682px;height:1px;background:#eeeeee"></div><div class="t" style="left:7px;top:306px;height:19px;line-height:19px;font-size:12.4px;color:#000">08 01 99 - Resíduos sem outras especificações.</div><div style="left:1px;top:324px;width:682px;height:1px;background:#eeeeee"></div><div class="t" style="left:7px;top:326px;height:19px;line-height:19px;font-size:12.4px;color:#000">12 01 17 - Resíduos de materiais de granalhagem não abrangidos em 12 01 16.</div><div style="left:1px;top:344px;width:682px;height:1px;background:#eeeeee"></div><div class="t" style="left:7px;top:346px;height:19px;line-height:19px;font-size:12.4px;color:#000">13 02 05 - Óleos minerais não clorados de motores, transmissões e lubrificação.</div><div style="left:1px;top:364px;width:682px;height:1px;background:#eeeeee"></div><div class="t" style="left:7px;top:366px;height:19px;line-height:19px;font-size:12.4px;color:#000">13 07 03 - Outros combustíveis (incluindo misturas).</div><div style="left:1px;top:384px;width:682px;height:1px;background:#eeeeee"></div><div class="t" style="left:7px;top:386px;height:19px;line-height:19px;font-size:12.4px;color:#000">14 06 03 - Outros solventes e misturas de solventes.</div><div style="left:1px;top:404px;width:682px;height:1px;background:#eeeeee"></div><div class="t" style="left:7px;top:406px;height:19px;line-height:19px;font-size:12.4px;color:#000">15 01 01 - Embalagens de papel e cartão.</div><div style="left:1px;top:424px;width:682px;height:1px;background:#eeeeee"></div><div class="t" style="left:7px;top:426px;height:19px;line-height:19px;font-size:12.4px;color:#000">15 01 04 - Embalagens de metal.</div><div style="left:1px;top:444px;width:682px;height:1px;background:#eeeeee"></div><div class="t" style="left:7px;top:446px;height:19px;line-height:19px;font-size:12.4px;color:#000">15 01 10 - Embalagens contendo ou contaminadas por resíduos de substâncias perigosas.</div><div style="left:1px;top:464px;width:682px;height:1px;background:#eeeeee"></div><div class="t" style="left:7px;top:466px;height:19px;line-height:19px;font-size:12.4px;color:#000">15 01 11 - Embalagens de metal, incluindo recipientes vazios sob pressão, contendo uma matriz porosa sólida perigosa.</div><div style="left:1px;top:484px;width:682px;height:1px;background:#eeeeee"></div><div class="t" style="left:7px;top:486px;height:19px;line-height:19px;font-size:12.4px;color:#000">15 02 02 - Absorventes, materiais filtrantes (incluindo filtros de óleo sem outras especificações), panos de limpeza e ves...</div></div><div style="left:658px;top:861px;width:718px;height:1px;background:#a8a8a8"></div><div style="left:658px;top:862px;width:718px;height:40px;background:#e9e9e9;border-radius:0 0 7px 7px"></div><div style="left:663px;top:870px;width:63px;height:25px;background:#fdfdfd;border:1px solid #0067c0;border-radius:4px;box-shadow:inset 0 0 0 1px rgba(0,103,192,.35)"></div><div class="t" style="left:663px;top:874px;height:19px;line-height:19px;width:63px;text-align:center;font-size:12.4px">Aceitar</div><div style="left:1301px;top:870px;width:68px;height:25px;background:#fdfdfd;border:1px solid #d0d0d0;border-radius:4px"></div><div class="t" style="left:1301px;top:874px;height:19px;line-height:19px;width:68px;text-align:center;font-size:12.4px">Cancelar</div><div style="left:654px;top:312px;width:727px;height:596px;border:3.2px solid #cc1e2d"></div></body></html>
